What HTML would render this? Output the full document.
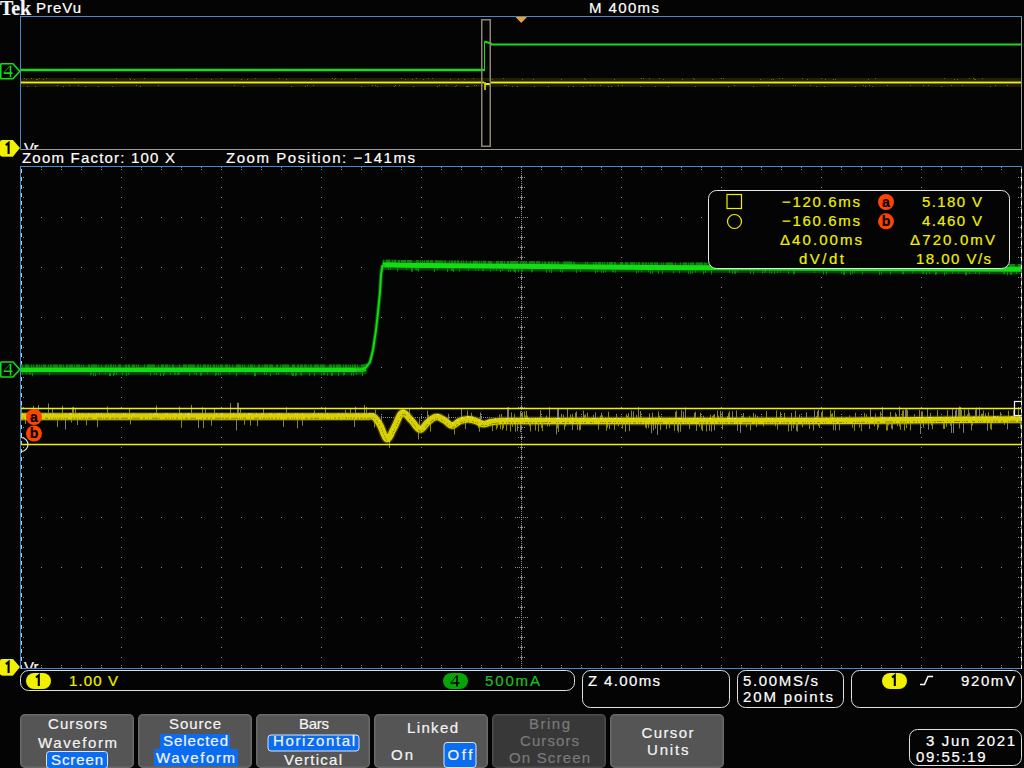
<!DOCTYPE html>
<html><head><meta charset="utf-8"><title>Oscilloscope</title>
<style>html,body{margin:0;padding:0;background:#040404;overflow:hidden;}svg{display:block;}</style>
</head><body><svg width="1024" height="768" viewBox="0 0 1024 768" font-family='"Liberation Sans", sans-serif'><rect x="0" y="0" width="1024" height="768" fill="#040404"/>
<text x="0" y="14.8" font-size="20" fill="#f4f4ff" stroke="#f4f4ff" stroke-width="0.2" font-weight="bold" text-anchor="start" textLength="31" lengthAdjust="spacing" font-family="Liberation Serif, serif">Tek</text>
<text x="36" y="13" font-size="15" fill="#fff" stroke="#fff" stroke-width="0.2" font-weight="normal" text-anchor="start" textLength="45" lengthAdjust="spacing" >PreVu</text>
<text x="589" y="13" font-size="15" fill="#fff" stroke="#fff" stroke-width="0.2" font-weight="normal" text-anchor="start" textLength="70" lengthAdjust="spacing" >M 400ms</text>
<line x1="20" y1="16.5" x2="1022" y2="16.5" stroke="#4a86c8" stroke-width="1"/>
<line x1="20.5" y1="16" x2="20.5" y2="150" stroke="#4a86c8" stroke-width="1"/>
<line x1="1021.5" y1="17" x2="1021.5" y2="150" stroke="#9a9a9a" stroke-width="1"/>
<line x1="21" y1="149.5" x2="1022" y2="149.5" stroke="#9a9a9a" stroke-width="1"/>
<rect x="21" y="78" width="1000" height="3" fill="#3c3a00" fill-opacity="0.55"/>
<rect x="21" y="84" width="1000" height="3" fill="#3c3a00" fill-opacity="0.45"/>
<path d="M24.5 78v1M26.5 79v1M27.5 86v1M31.5 78v1M35.5 86v1M36.5 79v1M37.5 79v1M39.5 78v1M43.5 79v1M46.5 78v1M57.5 85v1M63.5 86v1M69.5 85v1M74.5 78v1M78.5 85v1M85.5 86v1M98.5 86v1M112.5 86v1M116.5 78v1M129.5 78v1M130.5 79v1M134.5 79v1M136.5 85v1M140.5 86v1M144.5 78v1M158.5 85v1M186.5 78v1M196.5 78v1M211.5 79v1M221.5 78v1M234.5 85v1M241.5 79v1M243.5 86v1M247.5 79v1M255.5 78v1M279.5 78v1M286.5 79v1M291.5 86v1M305.5 86v1M307.5 85v1M311.5 79v1M313.5 85v1M332.5 78v1M334.5 79v1M335.5 78v1M341.5 79v1M355.5 78v1M361.5 86v1M372.5 85v1M375.5 85v1M377.5 86v1M394.5 86v1M395.5 85v1M399.5 85v1M401.5 78v1M405.5 79v1M412.5 79v1M413.5 86v1M416.5 78v1M423.5 79v1M428.5 78v1M432.5 78v1M437.5 86v1M439.5 85v1M446.5 85v1M450.5 79v1M455.5 86v1M456.5 85v1M458.5 79v1M464.5 79v1M466.5 86v1M467.5 86v1M468.5 86v1M473.5 78v1M474.5 85v1M476.5 85v1M482.5 78v1M489.5 85v1M490.5 85v1M492.5 79v1M503.5 78v1M504.5 85v1M506.5 85v1M512.5 86v1M517.5 86v1M522.5 79v1M533.5 79v1M534.5 86v1M548.5 86v1M561.5 79v1M568.5 86v1M573.5 86v1M583.5 86v1M584.5 78v1M585.5 79v1M590.5 85v1M594.5 85v1M600.5 85v1M608.5 86v1M611.5 86v1M614.5 79v1M618.5 85v1M622.5 85v1M640.5 86v1M641.5 78v1M643.5 78v1M649.5 78v1M655.5 86v1M659.5 78v1M663.5 79v1M668.5 86v1M682.5 79v1M693.5 78v1M694.5 79v1M695.5 86v1M712.5 79v1M721.5 78v1M723.5 78v1M728.5 86v1M734.5 85v1M753.5 86v1M760.5 79v1M768.5 85v1M771.5 79v1M773.5 79v1M779.5 78v1M782.5 78v1M793.5 85v1M795.5 85v1M802.5 78v1M807.5 79v1M810.5 85v1M816.5 86v1M821.5 78v1M824.5 86v1M825.5 79v1M833.5 79v1M835.5 79v1M855.5 86v1M863.5 85v1M865.5 86v1M868.5 79v1M869.5 85v1M872.5 86v1M875.5 78v1M887.5 85v1M910.5 85v1M923.5 85v1M928.5 85v1M941.5 86v1M944.5 78v1M951.5 85v1M954.5 79v1M957.5 79v1M962.5 85v1M969.5 78v1M973.5 78v1M974.5 79v1M975.5 79v1M982.5 78v1M990.5 86v1M995.5 85v1M1007.5 85v1" stroke="#6a6800" stroke-width="1" fill="none"/>
<path d="M21 82.5H484M491 82.5H1021" stroke="#f0f000" stroke-width="2" fill="none"/>
<path d="M485 82 V90" stroke="#f0f000" stroke-width="1.5" fill="none"/><path d="M485.5 84 H491" stroke="#f0f000" stroke-width="2" fill="none"/>
<path d="M21 70H484.5" stroke="#14dc14" stroke-width="2.5" fill="none"/>
<path d="M484.5 71V41.5" stroke="#14dc14" stroke-width="1" fill="none"/>
<path d="M484.5 41.5 L491 43.5 V44.5H1021" stroke="#14dc14" stroke-width="2" fill="none"/>
<rect x="481.75" y="19.75" width="8.5" height="126.5" fill="none" stroke="#8c8474" stroke-width="1.5"/>
<path d="M515.5 17 L527 17 L521.25 23 Z" fill="#f0a030"/>
<path d="M1.5 63.8 H13 L19.8 71.3 L13 78.8 H1.5 Q0.75 78.8 0.75 77.8 V64.8 Q0.75 63.8 1.5 63.8 Z" fill="#040404" stroke="#14dc14" stroke-width="1.6"/>
<path d="M10.5 65.8 V77.3 M3.8 73.1 H12.5" stroke="#14dc14" stroke-width="1.6" fill="none"/>
<path d="M4 72.5 L10 65.8" stroke="#14dc14" stroke-width="0.8" fill="none" stroke-opacity="0.8"/>
<path d="M2 140 H13 L20 148 L13 156.5 H2 Q0 156.5 0 154.5 V142 Q0 140 2 140 Z" fill="#f0f000"/>
<path d="M13 156.5 H2" stroke="#a8a800" stroke-width="1"/>
<path d="M5.8 145.2 L8.6 143 V154" stroke="#000" stroke-width="2.1" fill="none"/>
<text x="24" y="152.5" font-size="15" fill="#fff" stroke="#fff" stroke-width="0.2" font-weight="normal" text-anchor="start" clip-path="url(#cpv)">Vr</text>
<clipPath id="cpv"><rect x="21" y="130" width="100" height="19"/></clipPath>
<text x="22" y="163" font-size="15" fill="#fff" stroke="#fff" stroke-width="0.2" font-weight="normal" text-anchor="start" textLength="153" lengthAdjust="spacing" >Zoom Factor: 100 X</text>
<text x="226" y="163" font-size="15" fill="#fff" stroke="#fff" stroke-width="0.2" font-weight="normal" text-anchor="start" textLength="189" lengthAdjust="spacing" >Zoom Position: −141ms</text>
<path d="M23 177h1v1h-1zM23 187h1v1h-1zM23 197h1v1h-1zM23 207h1v1h-1zM23 217h1v1h-1zM23 227h1v1h-1zM23 237h1v1h-1zM23 247h1v1h-1zM23 257h1v1h-1zM23 267h1v1h-1zM23 277h1v1h-1zM23 287h1v1h-1zM23 297h1v1h-1zM23 307h1v1h-1zM23 317h1v1h-1zM23 327h1v1h-1zM23 337h1v1h-1zM23 347h1v1h-1zM23 357h1v1h-1zM23 367h1v1h-1zM23 377h1v1h-1zM23 387h1v1h-1zM23 397h1v1h-1zM23 407h1v1h-1zM23 417h1v1h-1zM23 427h1v1h-1zM23 437h1v1h-1zM23 447h1v1h-1zM23 457h1v1h-1zM23 467h1v1h-1zM23 477h1v1h-1zM23 487h1v1h-1zM23 497h1v1h-1zM23 507h1v1h-1zM23 517h1v1h-1zM23 527h1v1h-1zM23 537h1v1h-1zM23 547h1v1h-1zM23 557h1v1h-1zM23 567h1v1h-1zM23 577h1v1h-1zM23 587h1v1h-1zM23 597h1v1h-1zM23 607h1v1h-1zM23 617h1v1h-1zM23 627h1v1h-1zM23 637h1v1h-1zM23 647h1v1h-1zM23 657h1v1h-1zM25 417h1v1h-1zM27 417h1v1h-1zM29 417h1v1h-1zM31 417h1v1h-1zM33 417h1v1h-1zM35 417h1v1h-1zM37 417h1v1h-1zM39 417h1v1h-1zM41 169h1v1h-1zM41 217h1v1h-1zM41 267h1v1h-1zM41 317h1v1h-1zM41 367h1v1h-1zM41 414h1v1h-1zM41 416h1v1h-1zM41 417h1v1h-1zM41 418h1v1h-1zM41 420h1v1h-1zM41 467h1v1h-1zM41 517h1v1h-1zM41 567h1v1h-1zM41 617h1v1h-1zM41 665h1v1h-1zM43 417h1v1h-1zM45 417h1v1h-1zM47 417h1v1h-1zM49 417h1v1h-1zM51 417h1v1h-1zM53 417h1v1h-1zM55 417h1v1h-1zM57 417h1v1h-1zM59 417h1v1h-1zM61 169h1v1h-1zM61 217h1v1h-1zM61 267h1v1h-1zM61 317h1v1h-1zM61 367h1v1h-1zM61 414h1v1h-1zM61 416h1v1h-1zM61 417h1v1h-1zM61 418h1v1h-1zM61 420h1v1h-1zM61 467h1v1h-1zM61 517h1v1h-1zM61 567h1v1h-1zM61 617h1v1h-1zM61 665h1v1h-1zM63 417h1v1h-1zM65 417h1v1h-1zM67 417h1v1h-1zM69 417h1v1h-1zM71 417h1v1h-1zM73 417h1v1h-1zM75 417h1v1h-1zM77 417h1v1h-1zM79 417h1v1h-1zM81 169h1v1h-1zM81 217h1v1h-1zM81 267h1v1h-1zM81 317h1v1h-1zM81 367h1v1h-1zM81 414h1v1h-1zM81 416h1v1h-1zM81 417h1v1h-1zM81 418h1v1h-1zM81 420h1v1h-1zM81 467h1v1h-1zM81 517h1v1h-1zM81 567h1v1h-1zM81 617h1v1h-1zM81 665h1v1h-1zM83 417h1v1h-1zM85 417h1v1h-1zM87 417h1v1h-1zM89 417h1v1h-1zM91 417h1v1h-1zM93 417h1v1h-1zM95 417h1v1h-1zM97 417h1v1h-1zM99 417h1v1h-1zM101 169h1v1h-1zM101 217h1v1h-1zM101 267h1v1h-1zM101 317h1v1h-1zM101 367h1v1h-1zM101 414h1v1h-1zM101 416h1v1h-1zM101 417h1v1h-1zM101 418h1v1h-1zM101 420h1v1h-1zM101 467h1v1h-1zM101 517h1v1h-1zM101 567h1v1h-1zM101 617h1v1h-1zM101 665h1v1h-1zM103 417h1v1h-1zM105 417h1v1h-1zM107 417h1v1h-1zM109 417h1v1h-1zM111 417h1v1h-1zM113 417h1v1h-1zM115 417h1v1h-1zM117 417h1v1h-1zM119 417h1v1h-1zM121 169h1v1h-1zM121 177h1v1h-1zM121 187h1v1h-1zM121 197h1v1h-1zM121 207h1v1h-1zM121 217h1v1h-1zM121 227h1v1h-1zM121 237h1v1h-1zM121 247h1v1h-1zM121 257h1v1h-1zM121 267h1v1h-1zM121 277h1v1h-1zM121 287h1v1h-1zM121 297h1v1h-1zM121 307h1v1h-1zM121 317h1v1h-1zM121 327h1v1h-1zM121 337h1v1h-1zM121 347h1v1h-1zM121 357h1v1h-1zM121 367h1v1h-1zM121 377h1v1h-1zM121 387h1v1h-1zM121 397h1v1h-1zM121 407h1v1h-1zM121 414h1v1h-1zM121 416h1v1h-1zM121 417h1v1h-1zM121 418h1v1h-1zM121 420h1v1h-1zM121 427h1v1h-1zM121 437h1v1h-1zM121 447h1v1h-1zM121 457h1v1h-1zM121 467h1v1h-1zM121 477h1v1h-1zM121 487h1v1h-1zM121 497h1v1h-1zM121 507h1v1h-1zM121 517h1v1h-1zM121 527h1v1h-1zM121 537h1v1h-1zM121 547h1v1h-1zM121 557h1v1h-1zM121 567h1v1h-1zM121 577h1v1h-1zM121 587h1v1h-1zM121 597h1v1h-1zM121 607h1v1h-1zM121 617h1v1h-1zM121 627h1v1h-1zM121 637h1v1h-1zM121 647h1v1h-1zM121 657h1v1h-1zM121 665h1v1h-1zM123 417h1v1h-1zM125 417h1v1h-1zM127 417h1v1h-1zM129 417h1v1h-1zM131 417h1v1h-1zM133 417h1v1h-1zM135 417h1v1h-1zM137 417h1v1h-1zM139 417h1v1h-1zM141 169h1v1h-1zM141 217h1v1h-1zM141 267h1v1h-1zM141 317h1v1h-1zM141 367h1v1h-1zM141 414h1v1h-1zM141 416h1v1h-1zM141 417h1v1h-1zM141 418h1v1h-1zM141 420h1v1h-1zM141 467h1v1h-1zM141 517h1v1h-1zM141 567h1v1h-1zM141 617h1v1h-1zM141 665h1v1h-1zM143 417h1v1h-1zM145 417h1v1h-1zM147 417h1v1h-1zM149 417h1v1h-1zM151 417h1v1h-1zM153 417h1v1h-1zM155 417h1v1h-1zM157 417h1v1h-1zM159 417h1v1h-1zM161 169h1v1h-1zM161 217h1v1h-1zM161 267h1v1h-1zM161 317h1v1h-1zM161 367h1v1h-1zM161 414h1v1h-1zM161 416h1v1h-1zM161 417h1v1h-1zM161 418h1v1h-1zM161 420h1v1h-1zM161 467h1v1h-1zM161 517h1v1h-1zM161 567h1v1h-1zM161 617h1v1h-1zM161 665h1v1h-1zM163 417h1v1h-1zM165 417h1v1h-1zM167 417h1v1h-1zM169 417h1v1h-1zM171 417h1v1h-1zM173 417h1v1h-1zM175 417h1v1h-1zM177 417h1v1h-1zM179 417h1v1h-1zM181 169h1v1h-1zM181 217h1v1h-1zM181 267h1v1h-1zM181 317h1v1h-1zM181 367h1v1h-1zM181 414h1v1h-1zM181 416h1v1h-1zM181 417h1v1h-1zM181 418h1v1h-1zM181 420h1v1h-1zM181 467h1v1h-1zM181 517h1v1h-1zM181 567h1v1h-1zM181 617h1v1h-1zM181 665h1v1h-1zM183 417h1v1h-1zM185 417h1v1h-1zM187 417h1v1h-1zM189 417h1v1h-1zM191 417h1v1h-1zM193 417h1v1h-1zM195 417h1v1h-1zM197 417h1v1h-1zM199 417h1v1h-1zM201 169h1v1h-1zM201 217h1v1h-1zM201 267h1v1h-1zM201 317h1v1h-1zM201 367h1v1h-1zM201 414h1v1h-1zM201 416h1v1h-1zM201 417h1v1h-1zM201 418h1v1h-1zM201 420h1v1h-1zM201 467h1v1h-1zM201 517h1v1h-1zM201 567h1v1h-1zM201 617h1v1h-1zM201 665h1v1h-1zM203 417h1v1h-1zM205 417h1v1h-1zM207 417h1v1h-1zM209 417h1v1h-1zM211 417h1v1h-1zM213 417h1v1h-1zM215 417h1v1h-1zM217 417h1v1h-1zM219 417h1v1h-1zM221 169h1v1h-1zM221 177h1v1h-1zM221 187h1v1h-1zM221 197h1v1h-1zM221 207h1v1h-1zM221 217h1v1h-1zM221 227h1v1h-1zM221 237h1v1h-1zM221 247h1v1h-1zM221 257h1v1h-1zM221 267h1v1h-1zM221 277h1v1h-1zM221 287h1v1h-1zM221 297h1v1h-1zM221 307h1v1h-1zM221 317h1v1h-1zM221 327h1v1h-1zM221 337h1v1h-1zM221 347h1v1h-1zM221 357h1v1h-1zM221 367h1v1h-1zM221 377h1v1h-1zM221 387h1v1h-1zM221 397h1v1h-1zM221 407h1v1h-1zM221 414h1v1h-1zM221 416h1v1h-1zM221 417h1v1h-1zM221 418h1v1h-1zM221 420h1v1h-1zM221 427h1v1h-1zM221 437h1v1h-1zM221 447h1v1h-1zM221 457h1v1h-1zM221 467h1v1h-1zM221 477h1v1h-1zM221 487h1v1h-1zM221 497h1v1h-1zM221 507h1v1h-1zM221 517h1v1h-1zM221 527h1v1h-1zM221 537h1v1h-1zM221 547h1v1h-1zM221 557h1v1h-1zM221 567h1v1h-1zM221 577h1v1h-1zM221 587h1v1h-1zM221 597h1v1h-1zM221 607h1v1h-1zM221 617h1v1h-1zM221 627h1v1h-1zM221 637h1v1h-1zM221 647h1v1h-1zM221 657h1v1h-1zM221 665h1v1h-1zM223 417h1v1h-1zM225 417h1v1h-1zM227 417h1v1h-1zM229 417h1v1h-1zM231 417h1v1h-1zM233 417h1v1h-1zM235 417h1v1h-1zM237 417h1v1h-1zM239 417h1v1h-1zM241 169h1v1h-1zM241 217h1v1h-1zM241 267h1v1h-1zM241 317h1v1h-1zM241 367h1v1h-1zM241 414h1v1h-1zM241 416h1v1h-1zM241 417h1v1h-1zM241 418h1v1h-1zM241 420h1v1h-1zM241 467h1v1h-1zM241 517h1v1h-1zM241 567h1v1h-1zM241 617h1v1h-1zM241 665h1v1h-1zM243 417h1v1h-1zM245 417h1v1h-1zM247 417h1v1h-1zM249 417h1v1h-1zM251 417h1v1h-1zM253 417h1v1h-1zM255 417h1v1h-1zM257 417h1v1h-1zM259 417h1v1h-1zM261 169h1v1h-1zM261 217h1v1h-1zM261 267h1v1h-1zM261 317h1v1h-1zM261 367h1v1h-1zM261 414h1v1h-1zM261 416h1v1h-1zM261 417h1v1h-1zM261 418h1v1h-1zM261 420h1v1h-1zM261 467h1v1h-1zM261 517h1v1h-1zM261 567h1v1h-1zM261 617h1v1h-1zM261 665h1v1h-1zM263 417h1v1h-1zM265 417h1v1h-1zM267 417h1v1h-1zM269 417h1v1h-1zM271 417h1v1h-1zM273 417h1v1h-1zM275 417h1v1h-1zM277 417h1v1h-1zM279 417h1v1h-1zM281 169h1v1h-1zM281 217h1v1h-1zM281 267h1v1h-1zM281 317h1v1h-1zM281 367h1v1h-1zM281 414h1v1h-1zM281 416h1v1h-1zM281 417h1v1h-1zM281 418h1v1h-1zM281 420h1v1h-1zM281 467h1v1h-1zM281 517h1v1h-1zM281 567h1v1h-1zM281 617h1v1h-1zM281 665h1v1h-1zM283 417h1v1h-1zM285 417h1v1h-1zM287 417h1v1h-1zM289 417h1v1h-1zM291 417h1v1h-1zM293 417h1v1h-1zM295 417h1v1h-1zM297 417h1v1h-1zM299 417h1v1h-1zM301 169h1v1h-1zM301 217h1v1h-1zM301 267h1v1h-1zM301 317h1v1h-1zM301 367h1v1h-1zM301 414h1v1h-1zM301 416h1v1h-1zM301 417h1v1h-1zM301 418h1v1h-1zM301 420h1v1h-1zM301 467h1v1h-1zM301 517h1v1h-1zM301 567h1v1h-1zM301 617h1v1h-1zM301 665h1v1h-1zM303 417h1v1h-1zM305 417h1v1h-1zM307 417h1v1h-1zM309 417h1v1h-1zM311 417h1v1h-1zM313 417h1v1h-1zM315 417h1v1h-1zM317 417h1v1h-1zM319 417h1v1h-1zM321 169h1v1h-1zM321 177h1v1h-1zM321 187h1v1h-1zM321 197h1v1h-1zM321 207h1v1h-1zM321 217h1v1h-1zM321 227h1v1h-1zM321 237h1v1h-1zM321 247h1v1h-1zM321 257h1v1h-1zM321 267h1v1h-1zM321 277h1v1h-1zM321 287h1v1h-1zM321 297h1v1h-1zM321 307h1v1h-1zM321 317h1v1h-1zM321 327h1v1h-1zM321 337h1v1h-1zM321 347h1v1h-1zM321 357h1v1h-1zM321 367h1v1h-1zM321 377h1v1h-1zM321 387h1v1h-1zM321 397h1v1h-1zM321 407h1v1h-1zM321 414h1v1h-1zM321 416h1v1h-1zM321 417h1v1h-1zM321 418h1v1h-1zM321 420h1v1h-1zM321 427h1v1h-1zM321 437h1v1h-1zM321 447h1v1h-1zM321 457h1v1h-1zM321 467h1v1h-1zM321 477h1v1h-1zM321 487h1v1h-1zM321 497h1v1h-1zM321 507h1v1h-1zM321 517h1v1h-1zM321 527h1v1h-1zM321 537h1v1h-1zM321 547h1v1h-1zM321 557h1v1h-1zM321 567h1v1h-1zM321 577h1v1h-1zM321 587h1v1h-1zM321 597h1v1h-1zM321 607h1v1h-1zM321 617h1v1h-1zM321 627h1v1h-1zM321 637h1v1h-1zM321 647h1v1h-1zM321 657h1v1h-1zM321 665h1v1h-1zM323 417h1v1h-1zM325 417h1v1h-1zM327 417h1v1h-1zM329 417h1v1h-1zM331 417h1v1h-1zM333 417h1v1h-1zM335 417h1v1h-1zM337 417h1v1h-1zM339 417h1v1h-1zM341 169h1v1h-1zM341 217h1v1h-1zM341 267h1v1h-1zM341 317h1v1h-1zM341 367h1v1h-1zM341 414h1v1h-1zM341 416h1v1h-1zM341 417h1v1h-1zM341 418h1v1h-1zM341 420h1v1h-1zM341 467h1v1h-1zM341 517h1v1h-1zM341 567h1v1h-1zM341 617h1v1h-1zM341 665h1v1h-1zM343 417h1v1h-1zM345 417h1v1h-1zM347 417h1v1h-1zM349 417h1v1h-1zM351 417h1v1h-1zM353 417h1v1h-1zM355 417h1v1h-1zM357 417h1v1h-1zM359 417h1v1h-1zM361 169h1v1h-1zM361 217h1v1h-1zM361 267h1v1h-1zM361 317h1v1h-1zM361 367h1v1h-1zM361 414h1v1h-1zM361 416h1v1h-1zM361 417h1v1h-1zM361 418h1v1h-1zM361 420h1v1h-1zM361 467h1v1h-1zM361 517h1v1h-1zM361 567h1v1h-1zM361 617h1v1h-1zM361 665h1v1h-1zM363 417h1v1h-1zM365 417h1v1h-1zM367 417h1v1h-1zM369 417h1v1h-1zM371 417h1v1h-1zM373 417h1v1h-1zM375 417h1v1h-1zM377 417h1v1h-1zM379 417h1v1h-1zM381 169h1v1h-1zM381 217h1v1h-1zM381 267h1v1h-1zM381 317h1v1h-1zM381 367h1v1h-1zM381 414h1v1h-1zM381 416h1v1h-1zM381 417h1v1h-1zM381 418h1v1h-1zM381 420h1v1h-1zM381 467h1v1h-1zM381 517h1v1h-1zM381 567h1v1h-1zM381 617h1v1h-1zM381 665h1v1h-1zM383 417h1v1h-1zM385 417h1v1h-1zM387 417h1v1h-1zM389 417h1v1h-1zM391 417h1v1h-1zM393 417h1v1h-1zM395 417h1v1h-1zM397 417h1v1h-1zM399 417h1v1h-1zM401 169h1v1h-1zM401 217h1v1h-1zM401 267h1v1h-1zM401 317h1v1h-1zM401 367h1v1h-1zM401 414h1v1h-1zM401 416h1v1h-1zM401 417h1v1h-1zM401 418h1v1h-1zM401 420h1v1h-1zM401 467h1v1h-1zM401 517h1v1h-1zM401 567h1v1h-1zM401 617h1v1h-1zM401 665h1v1h-1zM403 417h1v1h-1zM405 417h1v1h-1zM407 417h1v1h-1zM409 417h1v1h-1zM411 417h1v1h-1zM413 417h1v1h-1zM415 417h1v1h-1zM417 417h1v1h-1zM419 417h1v1h-1zM421 169h1v1h-1zM421 177h1v1h-1zM421 187h1v1h-1zM421 197h1v1h-1zM421 207h1v1h-1zM421 217h1v1h-1zM421 227h1v1h-1zM421 237h1v1h-1zM421 247h1v1h-1zM421 257h1v1h-1zM421 267h1v1h-1zM421 277h1v1h-1zM421 287h1v1h-1zM421 297h1v1h-1zM421 307h1v1h-1zM421 317h1v1h-1zM421 327h1v1h-1zM421 337h1v1h-1zM421 347h1v1h-1zM421 357h1v1h-1zM421 367h1v1h-1zM421 377h1v1h-1zM421 387h1v1h-1zM421 397h1v1h-1zM421 407h1v1h-1zM421 414h1v1h-1zM421 416h1v1h-1zM421 417h1v1h-1zM421 418h1v1h-1zM421 420h1v1h-1zM421 427h1v1h-1zM421 437h1v1h-1zM421 447h1v1h-1zM421 457h1v1h-1zM421 467h1v1h-1zM421 477h1v1h-1zM421 487h1v1h-1zM421 497h1v1h-1zM421 507h1v1h-1zM421 517h1v1h-1zM421 527h1v1h-1zM421 537h1v1h-1zM421 547h1v1h-1zM421 557h1v1h-1zM421 567h1v1h-1zM421 577h1v1h-1zM421 587h1v1h-1zM421 597h1v1h-1zM421 607h1v1h-1zM421 617h1v1h-1zM421 627h1v1h-1zM421 637h1v1h-1zM421 647h1v1h-1zM421 657h1v1h-1zM421 665h1v1h-1zM423 417h1v1h-1zM425 417h1v1h-1zM427 417h1v1h-1zM429 417h1v1h-1zM431 417h1v1h-1zM433 417h1v1h-1zM435 417h1v1h-1zM437 417h1v1h-1zM439 417h1v1h-1zM441 169h1v1h-1zM441 217h1v1h-1zM441 267h1v1h-1zM441 317h1v1h-1zM441 367h1v1h-1zM441 414h1v1h-1zM441 416h1v1h-1zM441 417h1v1h-1zM441 418h1v1h-1zM441 420h1v1h-1zM441 467h1v1h-1zM441 517h1v1h-1zM441 567h1v1h-1zM441 617h1v1h-1zM441 665h1v1h-1zM443 417h1v1h-1zM445 417h1v1h-1zM447 417h1v1h-1zM449 417h1v1h-1zM451 417h1v1h-1zM453 417h1v1h-1zM455 417h1v1h-1zM457 417h1v1h-1zM459 417h1v1h-1zM461 169h1v1h-1zM461 217h1v1h-1zM461 267h1v1h-1zM461 317h1v1h-1zM461 367h1v1h-1zM461 414h1v1h-1zM461 416h1v1h-1zM461 417h1v1h-1zM461 418h1v1h-1zM461 420h1v1h-1zM461 467h1v1h-1zM461 517h1v1h-1zM461 567h1v1h-1zM461 617h1v1h-1zM461 665h1v1h-1zM463 417h1v1h-1zM465 417h1v1h-1zM467 417h1v1h-1zM469 417h1v1h-1zM471 417h1v1h-1zM473 417h1v1h-1zM475 417h1v1h-1zM477 417h1v1h-1zM479 417h1v1h-1zM481 169h1v1h-1zM481 217h1v1h-1zM481 267h1v1h-1zM481 317h1v1h-1zM481 367h1v1h-1zM481 414h1v1h-1zM481 416h1v1h-1zM481 417h1v1h-1zM481 418h1v1h-1zM481 420h1v1h-1zM481 467h1v1h-1zM481 517h1v1h-1zM481 567h1v1h-1zM481 617h1v1h-1zM481 665h1v1h-1zM483 417h1v1h-1zM485 417h1v1h-1zM487 417h1v1h-1zM489 417h1v1h-1zM491 417h1v1h-1zM493 417h1v1h-1zM495 417h1v1h-1zM497 417h1v1h-1zM499 417h1v1h-1zM501 169h1v1h-1zM501 217h1v1h-1zM501 267h1v1h-1zM501 317h1v1h-1zM501 367h1v1h-1zM501 414h1v1h-1zM501 416h1v1h-1zM501 417h1v1h-1zM501 418h1v1h-1zM501 420h1v1h-1zM501 467h1v1h-1zM501 517h1v1h-1zM501 567h1v1h-1zM501 617h1v1h-1zM501 665h1v1h-1zM503 417h1v1h-1zM505 417h1v1h-1zM507 417h1v1h-1zM509 417h1v1h-1zM511 417h1v1h-1zM513 417h1v1h-1zM515 217h1v1h-1zM515 267h1v1h-1zM515 317h1v1h-1zM515 367h1v1h-1zM515 417h1v1h-1zM515 467h1v1h-1zM515 517h1v1h-1zM515 567h1v1h-1zM515 617h1v1h-1zM517 217h1v1h-1zM517 267h1v1h-1zM517 317h1v1h-1zM517 367h1v1h-1zM517 417h1v1h-1zM517 467h1v1h-1zM517 517h1v1h-1zM517 567h1v1h-1zM517 617h1v1h-1zM518 177h1v1h-1zM518 187h1v1h-1zM518 197h1v1h-1zM518 207h1v1h-1zM518 227h1v1h-1zM518 237h1v1h-1zM518 247h1v1h-1zM518 257h1v1h-1zM518 277h1v1h-1zM518 287h1v1h-1zM518 297h1v1h-1zM518 307h1v1h-1zM518 327h1v1h-1zM518 337h1v1h-1zM518 347h1v1h-1zM518 357h1v1h-1zM518 377h1v1h-1zM518 387h1v1h-1zM518 397h1v1h-1zM518 407h1v1h-1zM518 427h1v1h-1zM518 437h1v1h-1zM518 447h1v1h-1zM518 457h1v1h-1zM518 477h1v1h-1zM518 487h1v1h-1zM518 497h1v1h-1zM518 507h1v1h-1zM518 527h1v1h-1zM518 537h1v1h-1zM518 547h1v1h-1zM518 557h1v1h-1zM518 577h1v1h-1zM518 587h1v1h-1zM518 597h1v1h-1zM518 607h1v1h-1zM518 627h1v1h-1zM518 637h1v1h-1zM518 647h1v1h-1zM518 657h1v1h-1zM519 217h1v1h-1zM519 267h1v1h-1zM519 317h1v1h-1zM519 367h1v1h-1zM519 417h1v1h-1zM519 467h1v1h-1zM519 517h1v1h-1zM519 567h1v1h-1zM519 617h1v1h-1zM520 177h1v1h-1zM520 187h1v1h-1zM520 197h1v1h-1zM520 207h1v1h-1zM520 227h1v1h-1zM520 237h1v1h-1zM520 247h1v1h-1zM520 257h1v1h-1zM520 277h1v1h-1zM520 287h1v1h-1zM520 297h1v1h-1zM520 307h1v1h-1zM520 327h1v1h-1zM520 337h1v1h-1zM520 347h1v1h-1zM520 357h1v1h-1zM520 377h1v1h-1zM520 387h1v1h-1zM520 397h1v1h-1zM520 407h1v1h-1zM520 427h1v1h-1zM520 437h1v1h-1zM520 447h1v1h-1zM520 457h1v1h-1zM520 477h1v1h-1zM520 487h1v1h-1zM520 497h1v1h-1zM520 507h1v1h-1zM520 527h1v1h-1zM520 537h1v1h-1zM520 547h1v1h-1zM520 557h1v1h-1zM520 577h1v1h-1zM520 587h1v1h-1zM520 597h1v1h-1zM520 607h1v1h-1zM520 627h1v1h-1zM520 637h1v1h-1zM520 647h1v1h-1zM520 657h1v1h-1zM521 169h1v1h-1zM521 171h1v1h-1zM521 173h1v1h-1zM521 175h1v1h-1zM521 176h1v1h-1zM521 177h1v1h-1zM521 178h1v1h-1zM521 179h1v1h-1zM521 181h1v1h-1zM521 183h1v1h-1zM521 185h1v1h-1zM521 186h1v1h-1zM521 187h1v1h-1zM521 188h1v1h-1zM521 189h1v1h-1zM521 191h1v1h-1zM521 193h1v1h-1zM521 195h1v1h-1zM521 196h1v1h-1zM521 197h1v1h-1zM521 198h1v1h-1zM521 199h1v1h-1zM521 201h1v1h-1zM521 203h1v1h-1zM521 205h1v1h-1zM521 206h1v1h-1zM521 207h1v1h-1zM521 208h1v1h-1zM521 209h1v1h-1zM521 211h1v1h-1zM521 213h1v1h-1zM521 215h1v1h-1zM521 217h1v1h-1zM521 219h1v1h-1zM521 221h1v1h-1zM521 223h1v1h-1zM521 225h1v1h-1zM521 226h1v1h-1zM521 227h1v1h-1zM521 228h1v1h-1zM521 229h1v1h-1zM521 231h1v1h-1zM521 233h1v1h-1zM521 235h1v1h-1zM521 236h1v1h-1zM521 237h1v1h-1zM521 238h1v1h-1zM521 239h1v1h-1zM521 241h1v1h-1zM521 243h1v1h-1zM521 245h1v1h-1zM521 246h1v1h-1zM521 247h1v1h-1zM521 248h1v1h-1zM521 249h1v1h-1zM521 251h1v1h-1zM521 253h1v1h-1zM521 255h1v1h-1zM521 256h1v1h-1zM521 257h1v1h-1zM521 258h1v1h-1zM521 259h1v1h-1zM521 261h1v1h-1zM521 263h1v1h-1zM521 265h1v1h-1zM521 267h1v1h-1zM521 269h1v1h-1zM521 271h1v1h-1zM521 273h1v1h-1zM521 275h1v1h-1zM521 276h1v1h-1zM521 277h1v1h-1zM521 278h1v1h-1zM521 279h1v1h-1zM521 281h1v1h-1zM521 283h1v1h-1zM521 285h1v1h-1zM521 286h1v1h-1zM521 287h1v1h-1zM521 288h1v1h-1zM521 289h1v1h-1zM521 291h1v1h-1zM521 293h1v1h-1zM521 295h1v1h-1zM521 296h1v1h-1zM521 297h1v1h-1zM521 298h1v1h-1zM521 299h1v1h-1zM521 301h1v1h-1zM521 303h1v1h-1zM521 305h1v1h-1zM521 306h1v1h-1zM521 307h1v1h-1zM521 308h1v1h-1zM521 309h1v1h-1zM521 311h1v1h-1zM521 313h1v1h-1zM521 315h1v1h-1zM521 317h1v1h-1zM521 319h1v1h-1zM521 321h1v1h-1zM521 323h1v1h-1zM521 325h1v1h-1zM521 326h1v1h-1zM521 327h1v1h-1zM521 328h1v1h-1zM521 329h1v1h-1zM521 331h1v1h-1zM521 333h1v1h-1zM521 335h1v1h-1zM521 336h1v1h-1zM521 337h1v1h-1zM521 338h1v1h-1zM521 339h1v1h-1zM521 341h1v1h-1zM521 343h1v1h-1zM521 345h1v1h-1zM521 346h1v1h-1zM521 347h1v1h-1zM521 348h1v1h-1zM521 349h1v1h-1zM521 351h1v1h-1zM521 353h1v1h-1zM521 355h1v1h-1zM521 356h1v1h-1zM521 357h1v1h-1zM521 358h1v1h-1zM521 359h1v1h-1zM521 361h1v1h-1zM521 363h1v1h-1zM521 365h1v1h-1zM521 367h1v1h-1zM521 369h1v1h-1zM521 371h1v1h-1zM521 373h1v1h-1zM521 375h1v1h-1zM521 376h1v1h-1zM521 377h1v1h-1zM521 378h1v1h-1zM521 379h1v1h-1zM521 381h1v1h-1zM521 383h1v1h-1zM521 385h1v1h-1zM521 386h1v1h-1zM521 387h1v1h-1zM521 388h1v1h-1zM521 389h1v1h-1zM521 391h1v1h-1zM521 393h1v1h-1zM521 395h1v1h-1zM521 396h1v1h-1zM521 397h1v1h-1zM521 398h1v1h-1zM521 399h1v1h-1zM521 401h1v1h-1zM521 403h1v1h-1zM521 405h1v1h-1zM521 406h1v1h-1zM521 407h1v1h-1zM521 408h1v1h-1zM521 409h1v1h-1zM521 411h1v1h-1zM521 413h1v1h-1zM521 414h1v1h-1zM521 415h1v1h-1zM521 416h1v1h-1zM521 417h1v1h-1zM521 418h1v1h-1zM521 419h1v1h-1zM521 420h1v1h-1zM521 421h1v1h-1zM521 423h1v1h-1zM521 425h1v1h-1zM521 426h1v1h-1zM521 427h1v1h-1zM521 428h1v1h-1zM521 429h1v1h-1zM521 431h1v1h-1zM521 433h1v1h-1zM521 435h1v1h-1zM521 436h1v1h-1zM521 437h1v1h-1zM521 438h1v1h-1zM521 439h1v1h-1zM521 441h1v1h-1zM521 443h1v1h-1zM521 445h1v1h-1zM521 446h1v1h-1zM521 447h1v1h-1zM521 448h1v1h-1zM521 449h1v1h-1zM521 451h1v1h-1zM521 453h1v1h-1zM521 455h1v1h-1zM521 456h1v1h-1zM521 457h1v1h-1zM521 458h1v1h-1zM521 459h1v1h-1zM521 461h1v1h-1zM521 463h1v1h-1zM521 465h1v1h-1zM521 467h1v1h-1zM521 469h1v1h-1zM521 471h1v1h-1zM521 473h1v1h-1zM521 475h1v1h-1zM521 476h1v1h-1zM521 477h1v1h-1zM521 478h1v1h-1zM521 479h1v1h-1zM521 481h1v1h-1zM521 483h1v1h-1zM521 485h1v1h-1zM521 486h1v1h-1zM521 487h1v1h-1zM521 488h1v1h-1zM521 489h1v1h-1zM521 491h1v1h-1zM521 493h1v1h-1zM521 495h1v1h-1zM521 496h1v1h-1zM521 497h1v1h-1zM521 498h1v1h-1zM521 499h1v1h-1zM521 501h1v1h-1zM521 503h1v1h-1zM521 505h1v1h-1zM521 506h1v1h-1zM521 507h1v1h-1zM521 508h1v1h-1zM521 509h1v1h-1zM521 511h1v1h-1zM521 513h1v1h-1zM521 515h1v1h-1zM521 517h1v1h-1zM521 519h1v1h-1zM521 521h1v1h-1zM521 523h1v1h-1zM521 525h1v1h-1zM521 526h1v1h-1zM521 527h1v1h-1zM521 528h1v1h-1zM521 529h1v1h-1zM521 531h1v1h-1zM521 533h1v1h-1zM521 535h1v1h-1zM521 536h1v1h-1zM521 537h1v1h-1zM521 538h1v1h-1zM521 539h1v1h-1zM521 541h1v1h-1zM521 543h1v1h-1zM521 545h1v1h-1zM521 546h1v1h-1zM521 547h1v1h-1zM521 548h1v1h-1zM521 549h1v1h-1zM521 551h1v1h-1zM521 553h1v1h-1zM521 555h1v1h-1zM521 556h1v1h-1zM521 557h1v1h-1zM521 558h1v1h-1zM521 559h1v1h-1zM521 561h1v1h-1zM521 563h1v1h-1zM521 565h1v1h-1zM521 567h1v1h-1zM521 569h1v1h-1zM521 571h1v1h-1zM521 573h1v1h-1zM521 575h1v1h-1zM521 576h1v1h-1zM521 577h1v1h-1zM521 578h1v1h-1zM521 579h1v1h-1zM521 581h1v1h-1zM521 583h1v1h-1zM521 585h1v1h-1zM521 586h1v1h-1zM521 587h1v1h-1zM521 588h1v1h-1zM521 589h1v1h-1zM521 591h1v1h-1zM521 593h1v1h-1zM521 595h1v1h-1zM521 596h1v1h-1zM521 597h1v1h-1zM521 598h1v1h-1zM521 599h1v1h-1zM521 601h1v1h-1zM521 603h1v1h-1zM521 605h1v1h-1zM521 606h1v1h-1zM521 607h1v1h-1zM521 608h1v1h-1zM521 609h1v1h-1zM521 611h1v1h-1zM521 613h1v1h-1zM521 615h1v1h-1zM521 617h1v1h-1zM521 619h1v1h-1zM521 621h1v1h-1zM521 623h1v1h-1zM521 625h1v1h-1zM521 626h1v1h-1zM521 627h1v1h-1zM521 628h1v1h-1zM521 629h1v1h-1zM521 631h1v1h-1zM521 633h1v1h-1zM521 635h1v1h-1zM521 636h1v1h-1zM521 637h1v1h-1zM521 638h1v1h-1zM521 639h1v1h-1zM521 641h1v1h-1zM521 643h1v1h-1zM521 645h1v1h-1zM521 646h1v1h-1zM521 647h1v1h-1zM521 648h1v1h-1zM521 649h1v1h-1zM521 651h1v1h-1zM521 653h1v1h-1zM521 655h1v1h-1zM521 656h1v1h-1zM521 657h1v1h-1zM521 658h1v1h-1zM521 659h1v1h-1zM521 661h1v1h-1zM521 663h1v1h-1zM521 665h1v1h-1zM522 177h1v1h-1zM522 187h1v1h-1zM522 197h1v1h-1zM522 207h1v1h-1zM522 227h1v1h-1zM522 237h1v1h-1zM522 247h1v1h-1zM522 257h1v1h-1zM522 277h1v1h-1zM522 287h1v1h-1zM522 297h1v1h-1zM522 307h1v1h-1zM522 327h1v1h-1zM522 337h1v1h-1zM522 347h1v1h-1zM522 357h1v1h-1zM522 377h1v1h-1zM522 387h1v1h-1zM522 397h1v1h-1zM522 407h1v1h-1zM522 427h1v1h-1zM522 437h1v1h-1zM522 447h1v1h-1zM522 457h1v1h-1zM522 477h1v1h-1zM522 487h1v1h-1zM522 497h1v1h-1zM522 507h1v1h-1zM522 527h1v1h-1zM522 537h1v1h-1zM522 547h1v1h-1zM522 557h1v1h-1zM522 577h1v1h-1zM522 587h1v1h-1zM522 597h1v1h-1zM522 607h1v1h-1zM522 627h1v1h-1zM522 637h1v1h-1zM522 647h1v1h-1zM522 657h1v1h-1zM523 217h1v1h-1zM523 267h1v1h-1zM523 317h1v1h-1zM523 367h1v1h-1zM523 417h1v1h-1zM523 467h1v1h-1zM523 517h1v1h-1zM523 567h1v1h-1zM523 617h1v1h-1zM524 177h1v1h-1zM524 187h1v1h-1zM524 197h1v1h-1zM524 207h1v1h-1zM524 227h1v1h-1zM524 237h1v1h-1zM524 247h1v1h-1zM524 257h1v1h-1zM524 277h1v1h-1zM524 287h1v1h-1zM524 297h1v1h-1zM524 307h1v1h-1zM524 327h1v1h-1zM524 337h1v1h-1zM524 347h1v1h-1zM524 357h1v1h-1zM524 377h1v1h-1zM524 387h1v1h-1zM524 397h1v1h-1zM524 407h1v1h-1zM524 427h1v1h-1zM524 437h1v1h-1zM524 447h1v1h-1zM524 457h1v1h-1zM524 477h1v1h-1zM524 487h1v1h-1zM524 497h1v1h-1zM524 507h1v1h-1zM524 527h1v1h-1zM524 537h1v1h-1zM524 547h1v1h-1zM524 557h1v1h-1zM524 577h1v1h-1zM524 587h1v1h-1zM524 597h1v1h-1zM524 607h1v1h-1zM524 627h1v1h-1zM524 637h1v1h-1zM524 647h1v1h-1zM524 657h1v1h-1zM525 217h1v1h-1zM525 267h1v1h-1zM525 317h1v1h-1zM525 367h1v1h-1zM525 417h1v1h-1zM525 467h1v1h-1zM525 517h1v1h-1zM525 567h1v1h-1zM525 617h1v1h-1zM527 217h1v1h-1zM527 267h1v1h-1zM527 317h1v1h-1zM527 367h1v1h-1zM527 417h1v1h-1zM527 467h1v1h-1zM527 517h1v1h-1zM527 567h1v1h-1zM527 617h1v1h-1zM529 417h1v1h-1zM531 417h1v1h-1zM533 417h1v1h-1zM535 417h1v1h-1zM537 417h1v1h-1zM539 417h1v1h-1zM541 169h1v1h-1zM541 217h1v1h-1zM541 267h1v1h-1zM541 317h1v1h-1zM541 367h1v1h-1zM541 414h1v1h-1zM541 416h1v1h-1zM541 417h1v1h-1zM541 418h1v1h-1zM541 420h1v1h-1zM541 467h1v1h-1zM541 517h1v1h-1zM541 567h1v1h-1zM541 617h1v1h-1zM541 665h1v1h-1zM543 417h1v1h-1zM545 417h1v1h-1zM547 417h1v1h-1zM549 417h1v1h-1zM551 417h1v1h-1zM553 417h1v1h-1zM555 417h1v1h-1zM557 417h1v1h-1zM559 417h1v1h-1zM561 169h1v1h-1zM561 217h1v1h-1zM561 267h1v1h-1zM561 317h1v1h-1zM561 367h1v1h-1zM561 414h1v1h-1zM561 416h1v1h-1zM561 417h1v1h-1zM561 418h1v1h-1zM561 420h1v1h-1zM561 467h1v1h-1zM561 517h1v1h-1zM561 567h1v1h-1zM561 617h1v1h-1zM561 665h1v1h-1zM563 417h1v1h-1zM565 417h1v1h-1zM567 417h1v1h-1zM569 417h1v1h-1zM571 417h1v1h-1zM573 417h1v1h-1zM575 417h1v1h-1zM577 417h1v1h-1zM579 417h1v1h-1zM581 169h1v1h-1zM581 217h1v1h-1zM581 267h1v1h-1zM581 317h1v1h-1zM581 367h1v1h-1zM581 414h1v1h-1zM581 416h1v1h-1zM581 417h1v1h-1zM581 418h1v1h-1zM581 420h1v1h-1zM581 467h1v1h-1zM581 517h1v1h-1zM581 567h1v1h-1zM581 617h1v1h-1zM581 665h1v1h-1zM583 417h1v1h-1zM585 417h1v1h-1zM587 417h1v1h-1zM589 417h1v1h-1zM591 417h1v1h-1zM593 417h1v1h-1zM595 417h1v1h-1zM597 417h1v1h-1zM599 417h1v1h-1zM601 169h1v1h-1zM601 217h1v1h-1zM601 267h1v1h-1zM601 317h1v1h-1zM601 367h1v1h-1zM601 414h1v1h-1zM601 416h1v1h-1zM601 417h1v1h-1zM601 418h1v1h-1zM601 420h1v1h-1zM601 467h1v1h-1zM601 517h1v1h-1zM601 567h1v1h-1zM601 617h1v1h-1zM601 665h1v1h-1zM603 417h1v1h-1zM605 417h1v1h-1zM607 417h1v1h-1zM609 417h1v1h-1zM611 417h1v1h-1zM613 417h1v1h-1zM615 417h1v1h-1zM617 417h1v1h-1zM619 417h1v1h-1zM621 169h1v1h-1zM621 177h1v1h-1zM621 187h1v1h-1zM621 197h1v1h-1zM621 207h1v1h-1zM621 217h1v1h-1zM621 227h1v1h-1zM621 237h1v1h-1zM621 247h1v1h-1zM621 257h1v1h-1zM621 267h1v1h-1zM621 277h1v1h-1zM621 287h1v1h-1zM621 297h1v1h-1zM621 307h1v1h-1zM621 317h1v1h-1zM621 327h1v1h-1zM621 337h1v1h-1zM621 347h1v1h-1zM621 357h1v1h-1zM621 367h1v1h-1zM621 377h1v1h-1zM621 387h1v1h-1zM621 397h1v1h-1zM621 407h1v1h-1zM621 414h1v1h-1zM621 416h1v1h-1zM621 417h1v1h-1zM621 418h1v1h-1zM621 420h1v1h-1zM621 427h1v1h-1zM621 437h1v1h-1zM621 447h1v1h-1zM621 457h1v1h-1zM621 467h1v1h-1zM621 477h1v1h-1zM621 487h1v1h-1zM621 497h1v1h-1zM621 507h1v1h-1zM621 517h1v1h-1zM621 527h1v1h-1zM621 537h1v1h-1zM621 547h1v1h-1zM621 557h1v1h-1zM621 567h1v1h-1zM621 577h1v1h-1zM621 587h1v1h-1zM621 597h1v1h-1zM621 607h1v1h-1zM621 617h1v1h-1zM621 627h1v1h-1zM621 637h1v1h-1zM621 647h1v1h-1zM621 657h1v1h-1zM621 665h1v1h-1zM623 417h1v1h-1zM625 417h1v1h-1zM627 417h1v1h-1zM629 417h1v1h-1zM631 417h1v1h-1zM633 417h1v1h-1zM635 417h1v1h-1zM637 417h1v1h-1zM639 417h1v1h-1zM641 169h1v1h-1zM641 217h1v1h-1zM641 267h1v1h-1zM641 317h1v1h-1zM641 367h1v1h-1zM641 414h1v1h-1zM641 416h1v1h-1zM641 417h1v1h-1zM641 418h1v1h-1zM641 420h1v1h-1zM641 467h1v1h-1zM641 517h1v1h-1zM641 567h1v1h-1zM641 617h1v1h-1zM641 665h1v1h-1zM643 417h1v1h-1zM645 417h1v1h-1zM647 417h1v1h-1zM649 417h1v1h-1zM651 417h1v1h-1zM653 417h1v1h-1zM655 417h1v1h-1zM657 417h1v1h-1zM659 417h1v1h-1zM661 169h1v1h-1zM661 217h1v1h-1zM661 267h1v1h-1zM661 317h1v1h-1zM661 367h1v1h-1zM661 414h1v1h-1zM661 416h1v1h-1zM661 417h1v1h-1zM661 418h1v1h-1zM661 420h1v1h-1zM661 467h1v1h-1zM661 517h1v1h-1zM661 567h1v1h-1zM661 617h1v1h-1zM661 665h1v1h-1zM663 417h1v1h-1zM665 417h1v1h-1zM667 417h1v1h-1zM669 417h1v1h-1zM671 417h1v1h-1zM673 417h1v1h-1zM675 417h1v1h-1zM677 417h1v1h-1zM679 417h1v1h-1zM681 169h1v1h-1zM681 217h1v1h-1zM681 267h1v1h-1zM681 317h1v1h-1zM681 367h1v1h-1zM681 414h1v1h-1zM681 416h1v1h-1zM681 417h1v1h-1zM681 418h1v1h-1zM681 420h1v1h-1zM681 467h1v1h-1zM681 517h1v1h-1zM681 567h1v1h-1zM681 617h1v1h-1zM681 665h1v1h-1zM683 417h1v1h-1zM685 417h1v1h-1zM687 417h1v1h-1zM689 417h1v1h-1zM691 417h1v1h-1zM693 417h1v1h-1zM695 417h1v1h-1zM697 417h1v1h-1zM699 417h1v1h-1zM701 169h1v1h-1zM701 217h1v1h-1zM701 267h1v1h-1zM701 317h1v1h-1zM701 367h1v1h-1zM701 414h1v1h-1zM701 416h1v1h-1zM701 417h1v1h-1zM701 418h1v1h-1zM701 420h1v1h-1zM701 467h1v1h-1zM701 517h1v1h-1zM701 567h1v1h-1zM701 617h1v1h-1zM701 665h1v1h-1zM703 417h1v1h-1zM705 417h1v1h-1zM707 417h1v1h-1zM709 417h1v1h-1zM711 417h1v1h-1zM713 417h1v1h-1zM715 417h1v1h-1zM717 417h1v1h-1zM719 417h1v1h-1zM721 169h1v1h-1zM721 177h1v1h-1zM721 187h1v1h-1zM721 197h1v1h-1zM721 207h1v1h-1zM721 217h1v1h-1zM721 227h1v1h-1zM721 237h1v1h-1zM721 247h1v1h-1zM721 257h1v1h-1zM721 267h1v1h-1zM721 277h1v1h-1zM721 287h1v1h-1zM721 297h1v1h-1zM721 307h1v1h-1zM721 317h1v1h-1zM721 327h1v1h-1zM721 337h1v1h-1zM721 347h1v1h-1zM721 357h1v1h-1zM721 367h1v1h-1zM721 377h1v1h-1zM721 387h1v1h-1zM721 397h1v1h-1zM721 407h1v1h-1zM721 414h1v1h-1zM721 416h1v1h-1zM721 417h1v1h-1zM721 418h1v1h-1zM721 420h1v1h-1zM721 427h1v1h-1zM721 437h1v1h-1zM721 447h1v1h-1zM721 457h1v1h-1zM721 467h1v1h-1zM721 477h1v1h-1zM721 487h1v1h-1zM721 497h1v1h-1zM721 507h1v1h-1zM721 517h1v1h-1zM721 527h1v1h-1zM721 537h1v1h-1zM721 547h1v1h-1zM721 557h1v1h-1zM721 567h1v1h-1zM721 577h1v1h-1zM721 587h1v1h-1zM721 597h1v1h-1zM721 607h1v1h-1zM721 617h1v1h-1zM721 627h1v1h-1zM721 637h1v1h-1zM721 647h1v1h-1zM721 657h1v1h-1zM721 665h1v1h-1zM723 417h1v1h-1zM725 417h1v1h-1zM727 417h1v1h-1zM729 417h1v1h-1zM731 417h1v1h-1zM733 417h1v1h-1zM735 417h1v1h-1zM737 417h1v1h-1zM739 417h1v1h-1zM741 169h1v1h-1zM741 217h1v1h-1zM741 267h1v1h-1zM741 317h1v1h-1zM741 367h1v1h-1zM741 414h1v1h-1zM741 416h1v1h-1zM741 417h1v1h-1zM741 418h1v1h-1zM741 420h1v1h-1zM741 467h1v1h-1zM741 517h1v1h-1zM741 567h1v1h-1zM741 617h1v1h-1zM741 665h1v1h-1zM743 417h1v1h-1zM745 417h1v1h-1zM747 417h1v1h-1zM749 417h1v1h-1zM751 417h1v1h-1zM753 417h1v1h-1zM755 417h1v1h-1zM757 417h1v1h-1zM759 417h1v1h-1zM761 169h1v1h-1zM761 217h1v1h-1zM761 267h1v1h-1zM761 317h1v1h-1zM761 367h1v1h-1zM761 414h1v1h-1zM761 416h1v1h-1zM761 417h1v1h-1zM761 418h1v1h-1zM761 420h1v1h-1zM761 467h1v1h-1zM761 517h1v1h-1zM761 567h1v1h-1zM761 617h1v1h-1zM761 665h1v1h-1zM763 417h1v1h-1zM765 417h1v1h-1zM767 417h1v1h-1zM769 417h1v1h-1zM771 417h1v1h-1zM773 417h1v1h-1zM775 417h1v1h-1zM777 417h1v1h-1zM779 417h1v1h-1zM781 169h1v1h-1zM781 217h1v1h-1zM781 267h1v1h-1zM781 317h1v1h-1zM781 367h1v1h-1zM781 414h1v1h-1zM781 416h1v1h-1zM781 417h1v1h-1zM781 418h1v1h-1zM781 420h1v1h-1zM781 467h1v1h-1zM781 517h1v1h-1zM781 567h1v1h-1zM781 617h1v1h-1zM781 665h1v1h-1zM783 417h1v1h-1zM785 417h1v1h-1zM787 417h1v1h-1zM789 417h1v1h-1zM791 417h1v1h-1zM793 417h1v1h-1zM795 417h1v1h-1zM797 417h1v1h-1zM799 417h1v1h-1zM801 169h1v1h-1zM801 217h1v1h-1zM801 267h1v1h-1zM801 317h1v1h-1zM801 367h1v1h-1zM801 414h1v1h-1zM801 416h1v1h-1zM801 417h1v1h-1zM801 418h1v1h-1zM801 420h1v1h-1zM801 467h1v1h-1zM801 517h1v1h-1zM801 567h1v1h-1zM801 617h1v1h-1zM801 665h1v1h-1zM803 417h1v1h-1zM805 417h1v1h-1zM807 417h1v1h-1zM809 417h1v1h-1zM811 417h1v1h-1zM813 417h1v1h-1zM815 417h1v1h-1zM817 417h1v1h-1zM819 417h1v1h-1zM821 169h1v1h-1zM821 177h1v1h-1zM821 187h1v1h-1zM821 197h1v1h-1zM821 207h1v1h-1zM821 217h1v1h-1zM821 227h1v1h-1zM821 237h1v1h-1zM821 247h1v1h-1zM821 257h1v1h-1zM821 267h1v1h-1zM821 277h1v1h-1zM821 287h1v1h-1zM821 297h1v1h-1zM821 307h1v1h-1zM821 317h1v1h-1zM821 327h1v1h-1zM821 337h1v1h-1zM821 347h1v1h-1zM821 357h1v1h-1zM821 367h1v1h-1zM821 377h1v1h-1zM821 387h1v1h-1zM821 397h1v1h-1zM821 407h1v1h-1zM821 414h1v1h-1zM821 416h1v1h-1zM821 417h1v1h-1zM821 418h1v1h-1zM821 420h1v1h-1zM821 427h1v1h-1zM821 437h1v1h-1zM821 447h1v1h-1zM821 457h1v1h-1zM821 467h1v1h-1zM821 477h1v1h-1zM821 487h1v1h-1zM821 497h1v1h-1zM821 507h1v1h-1zM821 517h1v1h-1zM821 527h1v1h-1zM821 537h1v1h-1zM821 547h1v1h-1zM821 557h1v1h-1zM821 567h1v1h-1zM821 577h1v1h-1zM821 587h1v1h-1zM821 597h1v1h-1zM821 607h1v1h-1zM821 617h1v1h-1zM821 627h1v1h-1zM821 637h1v1h-1zM821 647h1v1h-1zM821 657h1v1h-1zM821 665h1v1h-1zM823 417h1v1h-1zM825 417h1v1h-1zM827 417h1v1h-1zM829 417h1v1h-1zM831 417h1v1h-1zM833 417h1v1h-1zM835 417h1v1h-1zM837 417h1v1h-1zM839 417h1v1h-1zM841 169h1v1h-1zM841 217h1v1h-1zM841 267h1v1h-1zM841 317h1v1h-1zM841 367h1v1h-1zM841 414h1v1h-1zM841 416h1v1h-1zM841 417h1v1h-1zM841 418h1v1h-1zM841 420h1v1h-1zM841 467h1v1h-1zM841 517h1v1h-1zM841 567h1v1h-1zM841 617h1v1h-1zM841 665h1v1h-1zM843 417h1v1h-1zM845 417h1v1h-1zM847 417h1v1h-1zM849 417h1v1h-1zM851 417h1v1h-1zM853 417h1v1h-1zM855 417h1v1h-1zM857 417h1v1h-1zM859 417h1v1h-1zM861 169h1v1h-1zM861 217h1v1h-1zM861 267h1v1h-1zM861 317h1v1h-1zM861 367h1v1h-1zM861 414h1v1h-1zM861 416h1v1h-1zM861 417h1v1h-1zM861 418h1v1h-1zM861 420h1v1h-1zM861 467h1v1h-1zM861 517h1v1h-1zM861 567h1v1h-1zM861 617h1v1h-1zM861 665h1v1h-1zM863 417h1v1h-1zM865 417h1v1h-1zM867 417h1v1h-1zM869 417h1v1h-1zM871 417h1v1h-1zM873 417h1v1h-1zM875 417h1v1h-1zM877 417h1v1h-1zM879 417h1v1h-1zM881 169h1v1h-1zM881 217h1v1h-1zM881 267h1v1h-1zM881 317h1v1h-1zM881 367h1v1h-1zM881 414h1v1h-1zM881 416h1v1h-1zM881 417h1v1h-1zM881 418h1v1h-1zM881 420h1v1h-1zM881 467h1v1h-1zM881 517h1v1h-1zM881 567h1v1h-1zM881 617h1v1h-1zM881 665h1v1h-1zM883 417h1v1h-1zM885 417h1v1h-1zM887 417h1v1h-1zM889 417h1v1h-1zM891 417h1v1h-1zM893 417h1v1h-1zM895 417h1v1h-1zM897 417h1v1h-1zM899 417h1v1h-1zM901 169h1v1h-1zM901 217h1v1h-1zM901 267h1v1h-1zM901 317h1v1h-1zM901 367h1v1h-1zM901 414h1v1h-1zM901 416h1v1h-1zM901 417h1v1h-1zM901 418h1v1h-1zM901 420h1v1h-1zM901 467h1v1h-1zM901 517h1v1h-1zM901 567h1v1h-1zM901 617h1v1h-1zM901 665h1v1h-1zM903 417h1v1h-1zM905 417h1v1h-1zM907 417h1v1h-1zM909 417h1v1h-1zM911 417h1v1h-1zM913 417h1v1h-1zM915 417h1v1h-1zM917 417h1v1h-1zM919 417h1v1h-1zM921 169h1v1h-1zM921 177h1v1h-1zM921 187h1v1h-1zM921 197h1v1h-1zM921 207h1v1h-1zM921 217h1v1h-1zM921 227h1v1h-1zM921 237h1v1h-1zM921 247h1v1h-1zM921 257h1v1h-1zM921 267h1v1h-1zM921 277h1v1h-1zM921 287h1v1h-1zM921 297h1v1h-1zM921 307h1v1h-1zM921 317h1v1h-1zM921 327h1v1h-1zM921 337h1v1h-1zM921 347h1v1h-1zM921 357h1v1h-1zM921 367h1v1h-1zM921 377h1v1h-1zM921 387h1v1h-1zM921 397h1v1h-1zM921 407h1v1h-1zM921 414h1v1h-1zM921 416h1v1h-1zM921 417h1v1h-1zM921 418h1v1h-1zM921 420h1v1h-1zM921 427h1v1h-1zM921 437h1v1h-1zM921 447h1v1h-1zM921 457h1v1h-1zM921 467h1v1h-1zM921 477h1v1h-1zM921 487h1v1h-1zM921 497h1v1h-1zM921 507h1v1h-1zM921 517h1v1h-1zM921 527h1v1h-1zM921 537h1v1h-1zM921 547h1v1h-1zM921 557h1v1h-1zM921 567h1v1h-1zM921 577h1v1h-1zM921 587h1v1h-1zM921 597h1v1h-1zM921 607h1v1h-1zM921 617h1v1h-1zM921 627h1v1h-1zM921 637h1v1h-1zM921 647h1v1h-1zM921 657h1v1h-1zM921 665h1v1h-1zM923 417h1v1h-1zM925 417h1v1h-1zM927 417h1v1h-1zM929 417h1v1h-1zM931 417h1v1h-1zM933 417h1v1h-1zM935 417h1v1h-1zM937 417h1v1h-1zM939 417h1v1h-1zM941 169h1v1h-1zM941 217h1v1h-1zM941 267h1v1h-1zM941 317h1v1h-1zM941 367h1v1h-1zM941 414h1v1h-1zM941 416h1v1h-1zM941 417h1v1h-1zM941 418h1v1h-1zM941 420h1v1h-1zM941 467h1v1h-1zM941 517h1v1h-1zM941 567h1v1h-1zM941 617h1v1h-1zM941 665h1v1h-1zM943 417h1v1h-1zM945 417h1v1h-1zM947 417h1v1h-1zM949 417h1v1h-1zM951 417h1v1h-1zM953 417h1v1h-1zM955 417h1v1h-1zM957 417h1v1h-1zM959 417h1v1h-1zM961 169h1v1h-1zM961 217h1v1h-1zM961 267h1v1h-1zM961 317h1v1h-1zM961 367h1v1h-1zM961 414h1v1h-1zM961 416h1v1h-1zM961 417h1v1h-1zM961 418h1v1h-1zM961 420h1v1h-1zM961 467h1v1h-1zM961 517h1v1h-1zM961 567h1v1h-1zM961 617h1v1h-1zM961 665h1v1h-1zM963 417h1v1h-1zM965 417h1v1h-1zM967 417h1v1h-1zM969 417h1v1h-1zM971 417h1v1h-1zM973 417h1v1h-1zM975 417h1v1h-1zM977 417h1v1h-1zM979 417h1v1h-1zM981 169h1v1h-1zM981 217h1v1h-1zM981 267h1v1h-1zM981 317h1v1h-1zM981 367h1v1h-1zM981 414h1v1h-1zM981 416h1v1h-1zM981 417h1v1h-1zM981 418h1v1h-1zM981 420h1v1h-1zM981 467h1v1h-1zM981 517h1v1h-1zM981 567h1v1h-1zM981 617h1v1h-1zM981 665h1v1h-1zM983 417h1v1h-1zM985 417h1v1h-1zM987 417h1v1h-1zM989 417h1v1h-1zM991 417h1v1h-1zM993 417h1v1h-1zM995 417h1v1h-1zM997 417h1v1h-1zM999 417h1v1h-1zM1001 169h1v1h-1zM1001 217h1v1h-1zM1001 267h1v1h-1zM1001 317h1v1h-1zM1001 367h1v1h-1zM1001 414h1v1h-1zM1001 416h1v1h-1zM1001 417h1v1h-1zM1001 418h1v1h-1zM1001 420h1v1h-1zM1001 467h1v1h-1zM1001 517h1v1h-1zM1001 567h1v1h-1zM1001 617h1v1h-1zM1001 665h1v1h-1zM1003 417h1v1h-1zM1005 417h1v1h-1zM1007 417h1v1h-1zM1009 417h1v1h-1zM1011 417h1v1h-1zM1013 417h1v1h-1zM1015 417h1v1h-1zM1017 417h1v1h-1zM1018 177h1v1h-1zM1018 187h1v1h-1zM1018 197h1v1h-1zM1018 207h1v1h-1zM1018 217h1v1h-1zM1018 227h1v1h-1zM1018 237h1v1h-1zM1018 247h1v1h-1zM1018 257h1v1h-1zM1018 267h1v1h-1zM1018 277h1v1h-1zM1018 287h1v1h-1zM1018 297h1v1h-1zM1018 307h1v1h-1zM1018 317h1v1h-1zM1018 327h1v1h-1zM1018 337h1v1h-1zM1018 347h1v1h-1zM1018 357h1v1h-1zM1018 367h1v1h-1zM1018 377h1v1h-1zM1018 387h1v1h-1zM1018 397h1v1h-1zM1018 407h1v1h-1zM1018 417h1v1h-1zM1018 427h1v1h-1zM1018 437h1v1h-1zM1018 447h1v1h-1zM1018 457h1v1h-1zM1018 467h1v1h-1zM1018 477h1v1h-1zM1018 487h1v1h-1zM1018 497h1v1h-1zM1018 507h1v1h-1zM1018 517h1v1h-1zM1018 527h1v1h-1zM1018 537h1v1h-1zM1018 547h1v1h-1zM1018 557h1v1h-1zM1018 567h1v1h-1zM1018 577h1v1h-1zM1018 587h1v1h-1zM1018 597h1v1h-1zM1018 607h1v1h-1zM1018 617h1v1h-1zM1018 627h1v1h-1zM1018 637h1v1h-1zM1018 647h1v1h-1zM1018 657h1v1h-1zM1019 417h1v1h-1zM1020 177h1v1h-1zM1020 187h1v1h-1zM1020 197h1v1h-1zM1020 207h1v1h-1zM1020 217h1v1h-1zM1020 227h1v1h-1zM1020 237h1v1h-1zM1020 247h1v1h-1zM1020 257h1v1h-1zM1020 267h1v1h-1zM1020 277h1v1h-1zM1020 287h1v1h-1zM1020 297h1v1h-1zM1020 307h1v1h-1zM1020 317h1v1h-1zM1020 327h1v1h-1zM1020 337h1v1h-1zM1020 347h1v1h-1zM1020 357h1v1h-1zM1020 367h1v1h-1zM1020 377h1v1h-1zM1020 387h1v1h-1zM1020 397h1v1h-1zM1020 407h1v1h-1zM1020 417h1v1h-1zM1020 427h1v1h-1zM1020 437h1v1h-1zM1020 447h1v1h-1zM1020 457h1v1h-1zM1020 467h1v1h-1zM1020 477h1v1h-1zM1020 487h1v1h-1zM1020 497h1v1h-1zM1020 507h1v1h-1zM1020 517h1v1h-1zM1020 527h1v1h-1zM1020 537h1v1h-1zM1020 547h1v1h-1zM1020 557h1v1h-1zM1020 567h1v1h-1zM1020 577h1v1h-1zM1020 587h1v1h-1zM1020 597h1v1h-1zM1020 607h1v1h-1zM1020 617h1v1h-1zM1020 627h1v1h-1zM1020 637h1v1h-1zM1020 647h1v1h-1zM1020 657h1v1h-1z" fill="#8c8c8c"/>
<line x1="20" y1="166.5" x2="1022" y2="166.5" stroke="#4a86c8" stroke-width="1"/>
<line x1="20.5" y1="166" x2="20.5" y2="669" stroke="#4a86c8" stroke-width="1"/>
<line x1="20" y1="668.5" x2="1022" y2="668.5" stroke="#4a86c8" stroke-width="1"/>
<path d="M41 167h1v1h-1z M41 667h1v1h-1zM61 167h1v1h-1z M61 667h1v1h-1zM81 167h1v1h-1z M81 667h1v1h-1zM101 167h1v1h-1z M101 667h1v1h-1zM121 167h1v1h-1z M121 667h1v1h-1zM141 167h1v1h-1z M141 667h1v1h-1zM161 167h1v1h-1z M161 667h1v1h-1zM181 167h1v1h-1z M181 667h1v1h-1zM201 167h1v1h-1z M201 667h1v1h-1zM221 167h1v1h-1z M221 667h1v1h-1zM241 167h1v1h-1z M241 667h1v1h-1zM261 167h1v1h-1z M261 667h1v1h-1zM281 167h1v1h-1z M281 667h1v1h-1zM301 167h1v1h-1z M301 667h1v1h-1zM321 167h1v1h-1z M321 667h1v1h-1zM341 167h1v1h-1z M341 667h1v1h-1zM361 167h1v1h-1z M361 667h1v1h-1zM381 167h1v1h-1z M381 667h1v1h-1zM401 167h1v1h-1z M401 667h1v1h-1zM421 167h1v1h-1z M421 667h1v1h-1zM441 167h1v1h-1z M441 667h1v1h-1zM461 167h1v1h-1z M461 667h1v1h-1zM481 167h1v1h-1z M481 667h1v1h-1zM501 167h1v1h-1z M501 667h1v1h-1zM521 167h1v1h-1z M521 667h1v1h-1zM541 167h1v1h-1z M541 667h1v1h-1zM561 167h1v1h-1z M561 667h1v1h-1zM581 167h1v1h-1z M581 667h1v1h-1zM601 167h1v1h-1z M601 667h1v1h-1zM621 167h1v1h-1z M621 667h1v1h-1zM641 167h1v1h-1z M641 667h1v1h-1zM661 167h1v1h-1z M661 667h1v1h-1zM681 167h1v1h-1z M681 667h1v1h-1zM701 167h1v1h-1z M701 667h1v1h-1zM721 167h1v1h-1z M721 667h1v1h-1zM741 167h1v1h-1z M741 667h1v1h-1zM761 167h1v1h-1z M761 667h1v1h-1zM781 167h1v1h-1z M781 667h1v1h-1zM801 167h1v1h-1z M801 667h1v1h-1zM821 167h1v1h-1z M821 667h1v1h-1zM841 167h1v1h-1z M841 667h1v1h-1zM861 167h1v1h-1z M861 667h1v1h-1zM881 167h1v1h-1z M881 667h1v1h-1zM901 167h1v1h-1z M901 667h1v1h-1zM921 167h1v1h-1z M921 667h1v1h-1zM941 167h1v1h-1z M941 667h1v1h-1zM961 167h1v1h-1z M961 667h1v1h-1zM981 167h1v1h-1z M981 667h1v1h-1zM1001 167h1v1h-1z M1001 667h1v1h-1z" fill="#4a86c8"/>
<path d="M21 169h1v4h-1zM21 177h1v4h-1zM21 185h1v4h-1zM21 193h1v4h-1zM21 201h1v4h-1zM21 209h1v4h-1zM21 217h1v4h-1zM21 225h1v4h-1zM21 233h1v4h-1zM21 241h1v4h-1zM21 249h1v4h-1zM21 257h1v4h-1zM21 265h1v4h-1zM21 273h1v4h-1zM21 281h1v4h-1zM21 289h1v4h-1zM21 297h1v4h-1zM21 305h1v4h-1zM21 313h1v4h-1zM21 321h1v4h-1zM21 329h1v4h-1zM21 337h1v4h-1zM21 345h1v4h-1zM21 353h1v4h-1zM21 361h1v4h-1zM21 369h1v4h-1zM21 377h1v4h-1zM21 385h1v4h-1zM21 393h1v4h-1zM21 401h1v4h-1zM21 409h1v4h-1zM21 417h1v4h-1zM21 425h1v4h-1zM21 433h1v4h-1zM21 441h1v4h-1zM21 449h1v4h-1zM21 457h1v4h-1zM21 465h1v4h-1zM21 473h1v4h-1zM21 481h1v4h-1zM21 489h1v4h-1zM21 497h1v4h-1zM21 505h1v4h-1zM21 513h1v4h-1zM21 521h1v4h-1zM21 529h1v4h-1zM21 537h1v4h-1zM21 545h1v4h-1zM21 553h1v4h-1zM21 561h1v4h-1zM21 569h1v4h-1zM21 577h1v4h-1zM21 585h1v4h-1zM21 593h1v4h-1zM21 601h1v4h-1zM21 609h1v4h-1zM21 617h1v4h-1zM21 625h1v4h-1zM21 633h1v4h-1zM21 641h1v4h-1zM21 649h1v4h-1zM21 657h1v4h-1zM21 665h1v4h-1z" fill="#9ad0ff"/>
<line x1="1021.5" y1="167" x2="1021.5" y2="668" stroke="#808080" stroke-width="1"/>
<path d="M1021 169h1v4h-1zM1021 177h1v4h-1zM1021 185h1v4h-1zM1021 193h1v4h-1zM1021 201h1v4h-1zM1021 209h1v4h-1zM1021 217h1v4h-1zM1021 225h1v4h-1zM1021 233h1v4h-1zM1021 241h1v4h-1zM1021 249h1v4h-1zM1021 257h1v4h-1zM1021 265h1v4h-1zM1021 273h1v4h-1zM1021 281h1v4h-1zM1021 289h1v4h-1zM1021 297h1v4h-1zM1021 305h1v4h-1zM1021 313h1v4h-1zM1021 321h1v4h-1zM1021 329h1v4h-1zM1021 337h1v4h-1zM1021 345h1v4h-1zM1021 353h1v4h-1zM1021 361h1v4h-1zM1021 369h1v4h-1zM1021 377h1v4h-1zM1021 385h1v4h-1zM1021 393h1v4h-1zM1021 401h1v4h-1zM1021 409h1v4h-1zM1021 417h1v4h-1zM1021 425h1v4h-1zM1021 433h1v4h-1zM1021 441h1v4h-1zM1021 449h1v4h-1zM1021 457h1v4h-1zM1021 465h1v4h-1zM1021 473h1v4h-1zM1021 481h1v4h-1zM1021 489h1v4h-1zM1021 497h1v4h-1zM1021 505h1v4h-1zM1021 513h1v4h-1zM1021 521h1v4h-1zM1021 529h1v4h-1zM1021 537h1v4h-1zM1021 545h1v4h-1zM1021 553h1v4h-1zM1021 561h1v4h-1zM1021 569h1v4h-1zM1021 577h1v4h-1zM1021 585h1v4h-1zM1021 593h1v4h-1zM1021 601h1v4h-1zM1021 609h1v4h-1zM1021 617h1v4h-1zM1021 625h1v4h-1zM1021 633h1v4h-1zM1021 641h1v4h-1zM1021 649h1v4h-1zM1021 657h1v4h-1zM1021 665h1v4h-1z" fill="#f0f0f0"/>
<path d="M21.0 369.8 L362.0 369.8 L366.0 368.8" stroke="#064a06" stroke-width="10" fill="none"/>
<path d="M382.5 265.0 L390.0 264.8 L400.0 265.2 L650.0 267.6 L1021.0 269.3" stroke="#064a06" stroke-width="10" fill="none"/>
<path d="M21 364.6h1v3h-1zM22 364.6h1v3h-1zM22 372.3h1v2.1h-1zM25 364.6h1v3h-1zM26 364.6h1v3h-1zM26 372.3h1v2.1h-1zM27 364.6h1v3h-1zM28 364.6h1v3h-1zM29 372.3h1v2.3h-1zM30 372.3h1v2.1h-1zM31 364.6h1v3h-1zM32 372.3h1v3.9h-1zM33 364.6h1v3h-1zM36 364.6h1v3h-1zM37 364.6h1v3h-1zM39 364.6h1v3h-1zM41 364.6h1v3h-1zM43 364.6h1v3h-1zM44 364.6h1v3h-1zM45 364.6h1v3h-1zM48 364.6h1v3h-1zM49 372.3h1v3.0h-1zM50 364.6h1v3h-1zM51 364.6h1v3h-1zM53 364.6h1v3h-1zM54 364.6h1v3h-1zM55 364.6h1v3h-1zM56 364.6h1v3h-1zM57 364.6h1v3h-1zM59 364.6h1v3h-1zM60 364.6h1v3h-1zM61 364.6h1v3h-1zM63 364.6h1v3h-1zM66 364.6h1v3h-1zM67 364.6h1v3h-1zM69 364.6h1v3h-1zM70 364.6h1v3h-1zM71 364.6h1v3h-1zM72 364.6h1v3h-1zM74 364.6h1v3h-1zM76 364.6h1v3h-1zM77 364.6h1v3h-1zM78 364.6h1v3h-1zM79 364.6h1v3h-1zM81 364.6h1v3h-1zM83 364.6h1v3h-1zM88 364.6h1v3h-1zM89 364.6h1v3h-1zM90 372.3h1v3.3h-1zM91 364.6h1v3h-1zM91 372.3h1v2.3h-1zM92 364.6h1v3h-1zM93 364.6h1v3h-1zM93 372.3h1v3.8h-1zM94 364.6h1v3h-1zM95 364.6h1v3h-1zM95 372.3h1v3.7h-1zM96 364.6h1v3h-1zM98 364.6h1v3h-1zM99 372.3h1v2.5h-1zM101 364.6h1v3h-1zM105 364.6h1v3h-1zM105 372.3h1v2.2h-1zM106 364.6h1v3h-1zM108 364.6h1v3h-1zM109 372.3h1v3.7h-1zM110 364.6h1v3h-1zM110 372.3h1v3.7h-1zM111 364.6h1v3h-1zM113 364.6h1v3h-1zM113 372.3h1v3.7h-1zM114 372.3h1v2.5h-1zM115 364.6h1v3h-1zM116 372.3h1v2.7h-1zM118 364.6h1v3h-1zM119 364.6h1v3h-1zM120 364.6h1v3h-1zM122 372.3h1v3.0h-1zM125 364.6h1v3h-1zM126 364.6h1v3h-1zM126 372.3h1v3.8h-1zM128 364.6h1v3h-1zM128 372.3h1v2.6h-1zM129 364.6h1v3h-1zM132 364.6h1v3h-1zM133 364.6h1v3h-1zM134 364.6h1v3h-1zM136 364.6h1v3h-1zM138 364.6h1v3h-1zM144 364.6h1v3h-1zM147 364.6h1v3h-1zM148 364.6h1v3h-1zM149 364.6h1v3h-1zM150 364.6h1v3h-1zM150 372.3h1v3.1h-1zM151 364.6h1v3h-1zM152 364.6h1v3h-1zM153 364.6h1v3h-1zM154 364.6h1v3h-1zM154 372.3h1v2.6h-1zM156 372.3h1v2.9h-1zM158 364.6h1v3h-1zM160 372.3h1v3.8h-1zM161 364.6h1v3h-1zM162 364.6h1v3h-1zM163 364.6h1v3h-1zM163 372.3h1v3.7h-1zM164 372.3h1v2.2h-1zM165 364.6h1v3h-1zM166 364.6h1v3h-1zM167 364.6h1v3h-1zM169 364.6h1v3h-1zM170 372.3h1v2.6h-1zM172 364.6h1v3h-1zM173 364.6h1v3h-1zM174 372.3h1v2.7h-1zM175 372.3h1v2.1h-1zM177 372.3h1v3.0h-1zM178 372.3h1v2.4h-1zM179 364.6h1v3h-1zM179 372.3h1v2.2h-1zM183 364.6h1v3h-1zM184 364.6h1v3h-1zM185 364.6h1v3h-1zM186 364.6h1v3h-1zM188 364.6h1v3h-1zM189 364.6h1v3h-1zM189 372.3h1v3.4h-1zM190 364.6h1v3h-1zM191 364.6h1v3h-1zM192 364.6h1v3h-1zM193 364.6h1v3h-1zM194 364.6h1v3h-1zM194 372.3h1v2.1h-1zM196 372.3h1v3.0h-1zM197 364.6h1v3h-1zM198 364.6h1v3h-1zM200 364.6h1v3h-1zM200 372.3h1v3.3h-1zM201 372.3h1v3.3h-1zM203 364.6h1v3h-1zM204 364.6h1v3h-1zM205 364.6h1v3h-1zM207 364.6h1v3h-1zM207 372.3h1v2.0h-1zM208 364.6h1v3h-1zM210 364.6h1v3h-1zM213 364.6h1v3h-1zM214 364.6h1v3h-1zM215 372.3h1v3.5h-1zM216 364.6h1v3h-1zM216 372.3h1v2.9h-1zM218 364.6h1v3h-1zM218 372.3h1v3.3h-1zM220 364.6h1v3h-1zM220 372.3h1v2.9h-1zM221 364.6h1v3h-1zM222 364.6h1v3h-1zM225 364.6h1v3h-1zM226 364.6h1v3h-1zM227 364.6h1v3h-1zM229 364.6h1v3h-1zM229 372.3h1v2.1h-1zM232 364.6h1v3h-1zM236 364.6h1v3h-1zM236 372.3h1v3.9h-1zM237 364.6h1v3h-1zM238 364.6h1v3h-1zM239 364.6h1v3h-1zM240 364.6h1v3h-1zM242 364.6h1v3h-1zM244 364.6h1v3h-1zM245 372.3h1v2.3h-1zM248 364.6h1v3h-1zM250 364.6h1v3h-1zM251 364.6h1v3h-1zM252 364.6h1v3h-1zM254 364.6h1v3h-1zM254 372.3h1v3.8h-1zM255 372.3h1v4.0h-1zM258 364.6h1v3h-1zM259 364.6h1v3h-1zM262 364.6h1v3h-1zM264 364.6h1v3h-1zM264 372.3h1v2.8h-1zM265 364.6h1v3h-1zM266 364.6h1v3h-1zM266 372.3h1v2.8h-1zM267 364.6h1v3h-1zM269 364.6h1v3h-1zM270 364.6h1v3h-1zM270 372.3h1v3.6h-1zM271 364.6h1v3h-1zM272 364.6h1v3h-1zM276 364.6h1v3h-1zM276 372.3h1v2.6h-1zM277 364.6h1v3h-1zM278 372.3h1v2.4h-1zM280 364.6h1v3h-1zM282 364.6h1v3h-1zM283 364.6h1v3h-1zM284 364.6h1v3h-1zM285 364.6h1v3h-1zM286 364.6h1v3h-1zM286 372.3h1v2.1h-1zM287 364.6h1v3h-1zM288 364.6h1v3h-1zM291 372.3h1v2.6h-1zM292 364.6h1v3h-1zM292 372.3h1v3.8h-1zM293 364.6h1v3h-1zM293 372.3h1v3.7h-1zM294 364.6h1v3h-1zM295 372.3h1v3.9h-1zM296 372.3h1v3.1h-1zM297 364.6h1v3h-1zM298 364.6h1v3h-1zM300 364.6h1v3h-1zM300 372.3h1v2.6h-1zM301 364.6h1v3h-1zM301 372.3h1v3.5h-1zM302 364.6h1v3h-1zM304 364.6h1v3h-1zM305 364.6h1v3h-1zM306 364.6h1v3h-1zM308 364.6h1v3h-1zM309 372.3h1v3.7h-1zM310 364.6h1v3h-1zM311 364.6h1v3h-1zM314 364.6h1v3h-1zM314 372.3h1v3.9h-1zM315 364.6h1v3h-1zM316 364.6h1v3h-1zM317 364.6h1v3h-1zM318 364.6h1v3h-1zM320 364.6h1v3h-1zM321 364.6h1v3h-1zM321 372.3h1v3.1h-1zM322 364.6h1v3h-1zM323 364.6h1v3h-1zM323 372.3h1v2.9h-1zM324 364.6h1v3h-1zM324 372.3h1v3.0h-1zM327 372.3h1v3.5h-1zM329 364.6h1v3h-1zM330 364.6h1v3h-1zM331 364.6h1v3h-1zM331 372.3h1v3.7h-1zM332 372.3h1v3.3h-1zM333 364.6h1v3h-1zM334 364.6h1v3h-1zM336 364.6h1v3h-1zM337 364.6h1v3h-1zM338 364.6h1v3h-1zM338 372.3h1v3.7h-1zM339 364.6h1v3h-1zM340 364.6h1v3h-1zM343 364.6h1v3h-1zM343 372.3h1v3.3h-1zM344 372.3h1v2.6h-1zM345 364.6h1v3h-1zM346 364.6h1v3h-1zM348 364.6h1v3h-1zM350 364.6h1v3h-1zM351 372.3h1v3.3h-1zM352 364.6h1v3h-1zM353 372.3h1v3.4h-1zM354 364.6h1v3h-1zM355 364.6h1v3h-1zM356 372.3h1v2.7h-1zM357 364.6h1v3h-1zM361 364.6h1v3h-1zM362 364.6h1v3h-1zM362 372.3h1v3.6h-1zM363 364.4h1v3h-1zM364 364.1h1v3h-1zM365 363.9h1v3h-1zM366 363.6h1v3h-1zM383 259.8h1v3h-1zM386 259.7h1v3h-1zM387 259.7h1v3h-1zM388 259.7h1v3h-1zM388 267.4h1v2.5h-1zM389 259.6h1v3h-1zM390 267.3h1v2.2h-1zM392 259.7h1v3h-1zM394 259.8h1v3h-1zM395 259.8h1v3h-1zM397 267.6h1v3.9h-1zM398 259.9h1v3h-1zM399 260.0h1v3h-1zM401 260.0h1v3h-1zM402 260.0h1v3h-1zM403 260.0h1v3h-1zM404 260.0h1v3h-1zM405 260.0h1v3h-1zM406 267.8h1v2.2h-1zM407 260.1h1v3h-1zM408 260.1h1v3h-1zM409 260.1h1v3h-1zM410 260.1h1v3h-1zM411 260.1h1v3h-1zM411 267.8h1v4.0h-1zM412 267.8h1v3.7h-1zM415 267.8h1v2.2h-1zM416 260.2h1v3h-1zM416 267.9h1v2.5h-1zM417 260.2h1v3h-1zM417 267.9h1v2.7h-1zM418 260.2h1v3h-1zM418 267.9h1v3.9h-1zM420 260.2h1v3h-1zM422 260.2h1v3h-1zM424 260.2h1v3h-1zM426 260.2h1v3h-1zM427 260.3h1v3h-1zM428 260.3h1v3h-1zM430 260.3h1v3h-1zM431 260.3h1v3h-1zM432 260.3h1v3h-1zM434 268.0h1v3.9h-1zM435 260.3h1v3h-1zM436 260.3h1v3h-1zM437 260.4h1v3h-1zM437 268.1h1v2.0h-1zM438 260.4h1v3h-1zM439 260.4h1v3h-1zM440 260.4h1v3h-1zM441 260.4h1v3h-1zM442 260.4h1v3h-1zM444 260.4h1v3h-1zM445 260.4h1v3h-1zM447 268.2h1v3.7h-1zM449 260.5h1v3h-1zM451 260.5h1v3h-1zM451 268.2h1v2.8h-1zM452 260.5h1v3h-1zM452 268.2h1v2.8h-1zM453 268.2h1v3.7h-1zM454 260.5h1v3h-1zM455 260.5h1v3h-1zM457 260.5h1v3h-1zM458 260.6h1v3h-1zM459 268.3h1v3.5h-1zM461 260.6h1v3h-1zM463 260.6h1v3h-1zM466 260.6h1v3h-1zM468 268.4h1v2.5h-1zM470 260.7h1v3h-1zM473 260.7h1v3h-1zM474 260.7h1v3h-1zM475 260.7h1v3h-1zM475 268.4h1v2.1h-1zM476 260.7h1v3h-1zM477 260.7h1v3h-1zM478 268.4h1v2.4h-1zM479 260.8h1v3h-1zM481 260.8h1v3h-1zM482 268.5h1v2.7h-1zM483 260.8h1v3h-1zM483 268.5h1v2.6h-1zM484 260.8h1v3h-1zM485 260.8h1v3h-1zM488 260.8h1v3h-1zM489 260.9h1v3h-1zM490 260.9h1v3h-1zM490 268.6h1v3.1h-1zM491 260.9h1v3h-1zM493 268.6h1v2.0h-1zM496 260.9h1v3h-1zM496 268.6h1v2.1h-1zM497 260.9h1v3h-1zM498 260.9h1v3h-1zM500 261.0h1v3h-1zM500 268.7h1v3.2h-1zM501 261.0h1v3h-1zM502 261.0h1v3h-1zM502 268.7h1v2.2h-1zM504 261.0h1v3h-1zM507 261.0h1v3h-1zM508 261.0h1v3h-1zM508 268.7h1v3.3h-1zM510 261.1h1v3h-1zM510 268.8h1v3.2h-1zM511 261.1h1v3h-1zM512 261.1h1v3h-1zM513 261.1h1v3h-1zM513 268.8h1v2.5h-1zM514 261.1h1v3h-1zM514 268.8h1v3.2h-1zM515 261.1h1v3h-1zM515 268.8h1v3.7h-1zM516 261.1h1v3h-1zM517 261.1h1v3h-1zM518 268.8h1v3.4h-1zM520 261.2h1v3h-1zM521 268.9h1v3.7h-1zM522 261.2h1v3h-1zM522 268.9h1v2.8h-1zM523 261.2h1v3h-1zM524 261.2h1v3h-1zM525 261.2h1v3h-1zM526 261.2h1v3h-1zM529 261.2h1v3h-1zM530 261.2h1v3h-1zM531 261.3h1v3h-1zM531 269.0h1v3.6h-1zM532 261.3h1v3h-1zM532 269.0h1v2.4h-1zM533 261.3h1v3h-1zM534 261.3h1v3h-1zM536 261.3h1v3h-1zM537 261.3h1v3h-1zM538 261.3h1v3h-1zM539 261.3h1v3h-1zM542 261.4h1v3h-1zM544 261.4h1v3h-1zM545 261.4h1v3h-1zM546 269.1h1v3.7h-1zM548 261.4h1v3h-1zM549 261.4h1v3h-1zM549 269.1h1v3.4h-1zM551 261.4h1v3h-1zM551 269.1h1v3.8h-1zM552 261.5h1v3h-1zM554 261.5h1v3h-1zM555 261.5h1v3h-1zM557 261.5h1v3h-1zM558 261.5h1v3h-1zM560 269.2h1v2.7h-1zM562 269.3h1v3.4h-1zM563 261.6h1v3h-1zM564 261.6h1v3h-1zM565 261.6h1v3h-1zM566 261.6h1v3h-1zM567 261.6h1v3h-1zM568 261.6h1v3h-1zM569 261.6h1v3h-1zM570 261.6h1v3h-1zM571 261.6h1v3h-1zM573 261.7h1v3h-1zM574 261.7h1v3h-1zM576 269.4h1v3.5h-1zM580 269.4h1v2.6h-1zM585 261.8h1v3h-1zM587 261.8h1v3h-1zM593 261.9h1v3h-1zM595 261.9h1v3h-1zM595 269.6h1v3.6h-1zM596 261.9h1v3h-1zM597 269.6h1v2.7h-1zM598 261.9h1v3h-1zM599 261.9h1v3h-1zM600 261.9h1v3h-1zM601 269.6h1v3.4h-1zM602 261.9h1v3h-1zM603 269.6h1v3.4h-1zM604 262.0h1v3h-1zM605 269.7h1v2.8h-1zM607 262.0h1v3h-1zM609 262.0h1v3h-1zM610 262.0h1v3h-1zM611 262.0h1v3h-1zM612 262.0h1v3h-1zM612 269.7h1v2.6h-1zM613 269.7h1v2.9h-1zM614 262.1h1v3h-1zM615 262.1h1v3h-1zM615 269.8h1v2.9h-1zM620 262.1h1v3h-1zM621 262.1h1v3h-1zM622 262.1h1v3h-1zM625 262.2h1v3h-1zM626 262.2h1v3h-1zM627 262.2h1v3h-1zM630 262.2h1v3h-1zM631 262.2h1v3h-1zM632 262.2h1v3h-1zM633 262.2h1v3h-1zM634 262.2h1v3h-1zM636 262.3h1v3h-1zM636 270.0h1v3.6h-1zM638 262.3h1v3h-1zM638 270.0h1v2.4h-1zM639 262.3h1v3h-1zM641 270.0h1v2.5h-1zM642 262.3h1v3h-1zM643 262.3h1v3h-1zM645 262.4h1v3h-1zM646 262.4h1v3h-1zM648 262.4h1v3h-1zM648 270.1h1v2.1h-1zM650 262.4h1v3h-1zM650 270.1h1v3.9h-1zM651 262.4h1v3h-1zM652 262.4h1v3h-1zM652 270.1h1v3.6h-1zM654 262.4h1v3h-1zM655 262.4h1v3h-1zM656 262.4h1v3h-1zM657 262.4h1v3h-1zM658 270.1h1v3.6h-1zM661 262.5h1v3h-1zM662 270.2h1v3.7h-1zM663 262.5h1v3h-1zM666 262.5h1v3h-1zM667 262.5h1v3h-1zM668 262.5h1v3h-1zM669 262.5h1v3h-1zM670 262.5h1v3h-1zM671 262.5h1v3h-1zM672 262.5h1v3h-1zM673 270.2h1v3.3h-1zM675 262.5h1v3h-1zM679 270.2h1v3.0h-1zM680 262.5h1v3h-1zM683 262.6h1v3h-1zM684 262.6h1v3h-1zM685 262.6h1v3h-1zM686 262.6h1v3h-1zM688 262.6h1v3h-1zM688 270.3h1v3.4h-1zM690 262.6h1v3h-1zM690 270.3h1v3.8h-1zM691 262.6h1v3h-1zM692 262.6h1v3h-1zM692 270.3h1v3.5h-1zM693 262.6h1v3h-1zM695 270.3h1v2.5h-1zM696 262.6h1v3h-1zM697 262.6h1v3h-1zM698 262.6h1v3h-1zM699 262.6h1v3h-1zM700 262.6h1v3h-1zM701 262.6h1v3h-1zM702 262.6h1v3h-1zM703 270.3h1v4.0h-1zM704 262.6h1v3h-1zM705 262.7h1v3h-1zM705 270.4h1v2.5h-1zM706 262.7h1v3h-1zM709 262.7h1v3h-1zM711 262.7h1v3h-1zM711 270.4h1v4.0h-1zM712 262.7h1v3h-1zM713 262.7h1v3h-1zM714 262.7h1v3h-1zM718 262.7h1v3h-1zM719 262.7h1v3h-1zM720 262.7h1v3h-1zM721 262.7h1v3h-1zM722 262.7h1v3h-1zM724 262.7h1v3h-1zM725 262.7h1v3h-1zM726 262.7h1v3h-1zM727 262.8h1v3h-1zM729 270.5h1v2.8h-1zM730 262.8h1v3h-1zM731 262.8h1v3h-1zM732 262.8h1v3h-1zM732 270.5h1v3.4h-1zM734 262.8h1v3h-1zM734 270.5h1v2.9h-1zM735 262.8h1v3h-1zM735 270.5h1v3.6h-1zM737 270.5h1v2.1h-1zM739 262.8h1v3h-1zM740 262.8h1v3h-1zM744 262.8h1v3h-1zM746 262.8h1v3h-1zM748 262.8h1v3h-1zM750 262.9h1v3h-1zM750 270.6h1v3.4h-1zM751 262.9h1v3h-1zM753 262.9h1v3h-1zM753 270.6h1v3.8h-1zM754 262.9h1v3h-1zM755 262.9h1v3h-1zM759 262.9h1v3h-1zM760 262.9h1v3h-1zM762 262.9h1v3h-1zM762 270.6h1v2.9h-1zM764 262.9h1v3h-1zM764 270.6h1v2.5h-1zM765 262.9h1v3h-1zM765 270.6h1v2.1h-1zM766 262.9h1v3h-1zM767 262.9h1v3h-1zM768 262.9h1v3h-1zM769 270.6h1v2.6h-1zM770 262.9h1v3h-1zM771 270.7h1v3.0h-1zM773 263.0h1v3h-1zM774 270.7h1v3.2h-1zM776 263.0h1v3h-1zM777 270.7h1v2.6h-1zM779 263.0h1v3h-1zM780 270.7h1v2.0h-1zM781 263.0h1v3h-1zM783 263.0h1v3h-1zM785 263.0h1v3h-1zM786 263.0h1v3h-1zM788 263.0h1v3h-1zM788 270.7h1v3.3h-1zM791 263.0h1v3h-1zM792 263.1h1v3h-1zM793 263.1h1v3h-1zM793 270.8h1v3.6h-1zM794 270.8h1v3.3h-1zM795 263.1h1v3h-1zM797 263.1h1v3h-1zM798 263.1h1v3h-1zM799 263.1h1v3h-1zM803 263.1h1v3h-1zM804 263.1h1v3h-1zM805 263.1h1v3h-1zM807 263.1h1v3h-1zM808 263.1h1v3h-1zM809 263.1h1v3h-1zM811 263.1h1v3h-1zM812 263.1h1v3h-1zM813 263.1h1v3h-1zM814 270.9h1v2.0h-1zM816 263.2h1v3h-1zM817 263.2h1v3h-1zM820 263.2h1v3h-1zM822 263.2h1v3h-1zM823 263.2h1v3h-1zM823 270.9h1v3.7h-1zM824 263.2h1v3h-1zM826 263.2h1v3h-1zM826 270.9h1v3.6h-1zM828 263.2h1v3h-1zM829 263.2h1v3h-1zM830 263.2h1v3h-1zM832 263.2h1v3h-1zM833 263.2h1v3h-1zM834 263.2h1v3h-1zM836 263.3h1v3h-1zM838 263.3h1v3h-1zM840 263.3h1v3h-1zM841 263.3h1v3h-1zM841 271.0h1v3.2h-1zM842 263.3h1v3h-1zM843 271.0h1v3.8h-1zM844 263.3h1v3h-1zM844 271.0h1v3.9h-1zM846 263.3h1v3h-1zM847 263.3h1v3h-1zM848 263.3h1v3h-1zM849 263.3h1v3h-1zM850 271.0h1v3.9h-1zM852 263.3h1v3h-1zM852 271.0h1v3.4h-1zM853 263.3h1v3h-1zM854 271.0h1v2.1h-1zM856 263.3h1v3h-1zM857 263.3h1v3h-1zM858 263.4h1v3h-1zM859 263.4h1v3h-1zM861 263.4h1v3h-1zM862 263.4h1v3h-1zM862 271.1h1v3.5h-1zM865 263.4h1v3h-1zM869 263.4h1v3h-1zM870 263.4h1v3h-1zM871 263.4h1v3h-1zM874 263.4h1v3h-1zM876 263.4h1v3h-1zM877 263.4h1v3h-1zM879 263.4h1v3h-1zM879 271.1h1v4.0h-1zM880 263.5h1v3h-1zM881 271.2h1v3.6h-1zM885 263.5h1v3h-1zM886 263.5h1v3h-1zM887 263.5h1v3h-1zM888 263.5h1v3h-1zM889 263.5h1v3h-1zM890 271.2h1v3.3h-1zM891 263.5h1v3h-1zM894 263.5h1v3h-1zM895 263.5h1v3h-1zM897 263.5h1v3h-1zM898 263.5h1v3h-1zM900 263.5h1v3h-1zM901 263.6h1v3h-1zM902 271.3h1v3.0h-1zM903 263.6h1v3h-1zM903 271.3h1v3.0h-1zM905 263.6h1v3h-1zM906 263.6h1v3h-1zM907 263.6h1v3h-1zM908 263.6h1v3h-1zM909 263.6h1v3h-1zM910 263.6h1v3h-1zM911 263.6h1v3h-1zM912 263.6h1v3h-1zM912 271.3h1v2.3h-1zM916 263.6h1v3h-1zM919 263.6h1v3h-1zM920 263.6h1v3h-1zM922 263.6h1v3h-1zM922 271.3h1v2.4h-1zM923 271.4h1v2.9h-1zM924 263.7h1v3h-1zM926 271.4h1v3.1h-1zM928 263.7h1v3h-1zM929 263.7h1v3h-1zM929 271.4h1v2.8h-1zM930 263.7h1v3h-1zM931 263.7h1v3h-1zM932 263.7h1v3h-1zM934 263.7h1v3h-1zM935 263.7h1v3h-1zM935 271.4h1v3.7h-1zM936 263.7h1v3h-1zM936 271.4h1v3.0h-1zM938 263.7h1v3h-1zM939 263.7h1v3h-1zM942 263.7h1v3h-1zM943 263.7h1v3h-1zM944 263.7h1v3h-1zM944 271.4h1v4.0h-1zM945 263.8h1v3h-1zM946 263.8h1v3h-1zM946 271.5h1v2.8h-1zM948 263.8h1v3h-1zM950 263.8h1v3h-1zM951 263.8h1v3h-1zM952 263.8h1v3h-1zM952 271.5h1v2.4h-1zM955 263.8h1v3h-1zM956 263.8h1v3h-1zM958 271.5h1v2.1h-1zM960 263.8h1v3h-1zM961 263.8h1v3h-1zM962 263.8h1v3h-1zM965 263.8h1v3h-1zM965 271.5h1v3.7h-1zM966 263.8h1v3h-1zM966 271.5h1v3.8h-1zM968 263.9h1v3h-1zM969 271.6h1v2.4h-1zM972 263.9h1v3h-1zM974 263.9h1v3h-1zM975 263.9h1v3h-1zM975 271.6h1v2.4h-1zM977 263.9h1v3h-1zM979 263.9h1v3h-1zM979 271.6h1v2.9h-1zM983 263.9h1v3h-1zM984 263.9h1v3h-1zM987 263.9h1v3h-1zM989 264.0h1v3h-1zM989 271.7h1v2.4h-1zM990 264.0h1v3h-1zM991 264.0h1v3h-1zM994 264.0h1v3h-1zM995 264.0h1v3h-1zM997 264.0h1v3h-1zM998 264.0h1v3h-1zM1000 264.0h1v3h-1zM1002 264.0h1v3h-1zM1003 264.0h1v3h-1zM1003 271.7h1v2.0h-1zM1004 264.0h1v3h-1zM1004 271.7h1v2.6h-1zM1005 264.0h1v3h-1zM1006 264.0h1v3h-1zM1007 264.0h1v3h-1zM1007 271.7h1v3.7h-1zM1009 264.0h1v3h-1zM1010 264.0h1v3h-1zM1010 271.7h1v2.8h-1zM1011 264.1h1v3h-1zM1011 271.8h1v3.2h-1zM1012 264.1h1v3h-1zM1013 264.1h1v3h-1zM1014 264.1h1v3h-1zM1016 271.8h1v2.0h-1zM1018 264.1h1v3h-1zM1019 264.1h1v3h-1zM1020 264.1h1v3h-1z" fill="#0c860c"/>
<path d="M21.0 369.8 L362.0 369.8 L366.0 368.8" stroke="#14dc14" stroke-width="4.5" fill="none"/>
<path d="M382.5 265.0 L390.0 264.8 L400.0 265.2 L650.0 267.6 L1021.0 269.3" stroke="#14dc14" stroke-width="5" fill="none"/>
<path d="M356.0 369.8 L362.0 369.3 L366.0 367.5 L370.0 362.0 L373.0 350.0 L376.0 330.0 L378.0 312.0 L380.0 292.0 L381.0 275.0 L382.5 265.0" stroke="#0a8a0a" stroke-width="4" fill="none" stroke-opacity="0.6" stroke-linejoin="round"/>
<path d="M356.0 369.8 L362.0 369.3 L366.0 367.5 L370.0 362.0 L373.0 350.0 L376.0 330.0 L378.0 312.0 L380.0 292.0 L381.0 275.0 L382.5 265.0" stroke="#14dc14" stroke-width="2" fill="none" stroke-linejoin="round"/>
<path d="M21.0 416.5 L90.8 416.5 L160.5 416.5 L230.2 416.5 L300.0 416.5 L317.0 416.5 L334.0 416.4 L351.0 416.4 L368.0 416.5 L369.0 416.4 L370.0 416.3 L371.0 416.2 L372.0 416.2 L373.0 416.5 L374.0 417.0 L375.0 417.8 L376.0 419.0 L377.0 420.3 L378.0 421.7 L379.0 423.3 L380.0 425.0 L381.0 427.0 L382.0 429.4 L383.0 432.0 L384.0 434.5 L385.0 436.7 L386.0 438.3 L387.0 439.0 L388.0 438.8 L389.0 437.7 L390.0 436.2 L391.0 434.2 L392.0 432.0 L393.0 429.9 L394.0 428.0 L395.0 426.1 L396.0 423.9 L397.0 421.6 L398.0 419.2 L399.0 417.1 L400.0 415.2 L401.0 413.8 L402.0 413.0 L403.0 412.8 L404.0 413.0 L405.0 413.6 L406.0 414.4 L407.0 415.5 L408.0 416.6 L409.0 417.8 L410.0 419.0 L411.0 420.0 L412.0 421.0 L413.0 422.3 L414.0 423.6 L415.0 425.0 L416.0 426.3 L417.0 427.5 L418.0 428.5 L419.0 429.2 L420.0 429.5 L421.0 429.4 L422.0 428.8 L423.0 427.8 L424.0 426.6 L425.0 425.4 L426.0 424.1 L427.0 422.9 L428.0 422.0 L429.0 421.2 L430.0 420.4 L431.0 419.6 L432.0 418.8 L433.0 418.2 L434.0 417.6 L435.0 417.2 L436.0 417.0 L437.0 417.0 L438.0 417.1 L439.0 417.4 L440.0 417.8 L441.0 418.3 L442.0 418.9 L443.0 419.5 L444.0 420.0 L445.0 420.6 L446.0 421.4 L447.0 422.3 L448.0 423.2 L449.0 424.1 L450.0 424.8 L451.0 425.3 L452.0 425.5 L453.0 425.4 L454.0 425.0 L455.0 424.4 L456.0 423.7 L457.0 422.9 L458.0 422.1 L459.0 421.5 L460.0 421.0 L461.1 420.6 L462.1 420.3 L463.2 420.0 L464.2 419.8 L465.3 419.6 L466.4 419.4 L467.4 419.3 L468.5 419.3 L469.6 419.4 L470.6 419.5 L471.7 419.7 L472.8 420.0 L473.9 420.3 L474.9 420.7 L476.0 421.0 L477.0 421.4 L478.0 421.9 L479.0 422.5 L480.0 423.0 L481.0 423.5 L482.0 423.8 L483.0 424.0 L484.0 424.0 L485.0 423.9 L486.0 423.7 L487.0 423.4 L488.0 423.1 L489.0 422.7 L490.0 422.4 L491.0 422.2 L492.0 422.0 L493.0 421.9 L494.0 421.7 L495.0 421.6 L496.0 421.5 L497.0 421.4 L498.0 421.3 L499.0 421.2 L500.0 421.2 L501.0 421.1 L502.0 421.1 L503.0 421.0 L504.0 421.0 L505.0 421.0 L578.8 420.9 L652.5 421.0 L726.2 421.1 L800.0 421.0 L855.2 420.7 L910.5 420.2 L965.8 419.7 L1021.0 419.5" stroke="#4a4800" stroke-width="9" fill="none" stroke-linejoin="round" stroke-opacity="0.8"/>
<path d="M25.5 419.5V424.0M33.5 413.5V409.9M38.5 419.5V423.5M52.5 413.5V408.5M57.5 419.5V427.1M62.5 413.5V405.8M71.5 419.5V422.5M72.5 413.5V407.3M73.5 413.5V406.9M75.5 413.5V408.3M86.5 419.5V425.3M97.5 419.5V427.2M107.5 413.5V406.5M129.5 413.5V408.1M130.5 419.5V424.5M156.5 413.5V405.4M179.5 413.5V406.6M181.5 419.5V427.8M191.5 413.5V404.9M202.5 413.5V407.2M203.5 419.5V428.2M211.5 419.5V425.7M214.5 413.5V408.7M240.5 413.5V408.8M244.5 419.5V424.8M250.5 419.5V425.7M257.5 419.5V426.1M283.5 419.5V422.5M297.5 419.5V428.3M314.5 413.5V410.3M325.5 413.5V407.2M345.5 413.4V409.8M350.5 413.4V408.2M364.5 413.5V405.1M374.5 420.0V427.4M375.5 414.8V409.7M389.5 440.7V448.0M395.5 423.1V418.1M418.5 431.5V439.4M419.5 426.2V418.5M428.5 419.0V414.8M430.5 423.4V431.7M454.5 428.0V434.4M461.5 417.6V411.8M465.5 422.6V429.0M467.5 416.4V410.6M471.5 416.6V412.7M478.5 424.9V428.1M479.5 425.5V431.8M492.5 425.0V431.2M496.5 424.5V429.6M497.5 424.4V427.8M499.5 418.2V414.6M500.5 424.2V429.1M501.5 418.1V415.0M502.5 424.1V430.2M503.5 424.0V428.3M506.5 424.0V430.6M507.5 418.0V415.9M510.5 424.0V431.5M511.5 418.0V412.3M512.5 424.0V426.8M514.5 418.0V413.7M515.5 424.0V431.7M520.5 418.0V411.2M522.5 418.0V412.7M524.5 418.0V411.3M525.5 418.0V415.5M526.5 418.0V410.9M527.5 418.0V415.6M529.5 424.0V426.3M530.5 424.0V431.5M535.5 424.0V430.5M538.5 424.0V431.6M540.5 418.0V410.3M541.5 424.0V428.0M542.5 424.0V431.2M546.5 417.9V415.5M547.5 423.9V426.4M549.5 423.9V426.4M557.5 423.9V428.3M558.5 423.9V431.9M561.5 417.9V414.7M563.5 417.9V414.7M564.5 423.9V429.7M565.5 423.9V426.5M567.5 417.9V414.3M570.5 417.9V414.4M572.5 417.9V414.1M575.5 417.9V412.7M576.5 417.9V411.5M577.5 423.9V429.9M579.5 423.9V430.5M580.5 423.9V429.8M583.5 417.9V410.6M584.5 417.9V415.3M585.5 417.9V414.2M587.5 417.9V412.6M593.5 417.9V414.8M595.5 417.9V413.9M598.5 423.9V429.6M600.5 417.9V415.6M601.5 417.9V412.8M602.5 417.9V415.3M606.5 423.9V430.8M607.5 423.9V427.6M608.5 417.9V411.7M609.5 423.9V429.0M614.5 423.9V429.8M616.5 417.9V413.8M618.5 423.9V426.2M622.5 424.0V428.7M625.5 424.0V431.8M626.5 418.0V414.1M627.5 418.0V415.8M628.5 418.0V413.1M629.5 424.0V431.1M631.5 418.0V410.5M633.5 418.0V411.3M636.5 418.0V414.9M640.5 418.0V411.0M645.5 424.0V427.5M646.5 424.0V428.5M648.5 424.0V427.9M649.5 418.0V413.4M652.5 418.0V412.6M653.5 424.0V430.5M655.5 424.0V428.6M658.5 418.0V411.5M659.5 418.0V415.6M660.5 424.0V430.0M666.5 424.0V429.1M669.5 424.0V428.3M674.5 424.0V430.9M675.5 418.0V411.9M676.5 418.0V410.5M677.5 424.0V430.6M680.5 424.0V431.8M681.5 418.0V410.2M683.5 418.0V411.5M685.5 418.0V413.1M689.5 424.0V429.1M694.5 418.0V412.8M696.5 424.0V430.9M699.5 424.0V426.7M700.5 418.0V412.7M701.5 424.0V429.6M702.5 424.0V431.1M703.5 418.0V415.7M706.5 424.1V431.4M709.5 424.1V430.8M710.5 418.1V414.6M711.5 424.1V431.5M712.5 418.1V415.9M713.5 418.1V414.9M714.5 418.1V414.0M717.5 418.1V410.5M718.5 418.1V415.7M720.5 418.1V410.9M722.5 424.1V429.7M727.5 418.1V416.0M728.5 418.1V413.2M729.5 418.1V411.3M736.5 418.1V410.5M742.5 418.1V415.7M743.5 418.1V413.0M746.5 424.1V427.2M749.5 418.1V415.7M750.5 424.1V430.3M753.5 418.0V412.9M755.5 418.0V414.3M756.5 424.0V427.1M757.5 418.0V415.9M763.5 424.0V426.5M766.5 418.0V411.2M775.5 424.0V426.3M776.5 418.0V410.5M780.5 418.0V411.9M784.5 418.0V412.9M788.5 424.0V431.5M791.5 424.0V430.9M793.5 424.0V428.3M795.5 418.0V410.7M797.5 424.0V431.7M799.5 418.0V414.6M802.5 424.0V427.2M809.5 423.9V429.0M813.5 423.9V430.3M816.5 417.9V415.9M817.5 417.9V411.2M818.5 423.9V426.1M819.5 423.9V427.8M821.5 417.9V412.2M822.5 417.9V410.2M830.5 417.8V410.5M831.5 417.8V414.0M832.5 417.8V413.2M833.5 423.8V430.1M834.5 417.8V410.4M835.5 423.8V430.4M849.5 417.7V415.3M852.5 423.7V427.9M854.5 423.7V430.8M855.5 417.7V412.8M859.5 423.6V427.7M861.5 423.6V431.1M864.5 417.6V412.9M866.5 417.6V414.3M874.5 423.5V426.3M875.5 417.5V413.7M877.5 423.5V430.2M878.5 423.5V427.7M880.5 417.4V411.6M882.5 417.4V409.5M886.5 423.4V430.6M887.5 423.4V430.4M888.5 423.4V425.5M890.5 417.4V411.9M891.5 423.3V428.4M895.5 417.3V412.5M896.5 417.3V414.4M897.5 423.3V426.1M899.5 423.3V426.6M900.5 423.3V429.9M902.5 417.2V410.6M903.5 417.2V410.3M904.5 423.2V430.5M906.5 423.2V428.0M907.5 417.2V410.2M910.5 423.2V430.4M914.5 417.1V414.1M919.5 417.1V409.9M921.5 417.1V411.3M922.5 417.1V411.5M923.5 423.1V427.6M927.5 417.0V411.9M930.5 417.0V412.9M931.5 423.0V425.6M932.5 423.0V429.2M937.5 416.9V410.2M943.5 422.9V428.8M944.5 422.9V429.0M946.5 422.9V426.8M947.5 416.9V410.1M950.5 422.8V425.7M955.5 416.8V411.7M958.5 416.8V409.1M959.5 422.8V428.4M961.5 416.7V409.9M964.5 416.7V409.4M967.5 416.7V414.2M969.5 416.7V412.8M971.5 422.7V430.5M972.5 422.7V425.5M975.5 416.7V409.6M981.5 416.6V413.9M982.5 416.6V413.7M983.5 416.6V410.5M985.5 416.6V413.4M987.5 422.6V425.4M988.5 416.6V412.2M990.5 422.6V428.7M991.5 422.6V430.0M1000.5 416.6V411.9M1004.5 422.6V424.9M1008.5 416.5V410.7M1013.5 416.5V410.3M1014.5 416.5V410.5M1018.5 416.5V409.1M1020.5 422.5V428.5" stroke="#8c8a00" stroke-width="1" fill="none"/>
<path d="M21.5 413.5V405.0M33.5 413.5V405.9M38.5 413.5V405.0M48.5 413.5V403.5M65.5 419.5V429.5M77.5 419.5V425.0M198.5 419.5V428.1M205.5 413.5V408.3M230.5 413.5V403.1M236.5 419.5V430.4M237.5 413.5V402.6M238.5 413.5V402.9M263.5 413.5V408.2M283.5 419.5V427.0M286.5 413.5V407.3M302.5 419.5V425.6M354.5 419.4V427.0M355.5 413.5V406.7M366.5 413.5V407.0M381.5 424.0V415.7M397.5 418.6V412.8M409.5 414.8V408.8M427.5 419.9V410.6M448.5 420.2V413.8M461.5 417.6V408.7M480.5 420.0V412.5M507.5 418.0V407.6M508.5 418.0V407.0M517.5 424.0V431.2M520.5 424.0V432.3M522.5 418.0V411.9M549.5 417.9V407.3M556.5 423.9V434.4M557.5 417.9V409.2M558.5 417.9V408.0M567.5 417.9V408.6M572.5 423.9V430.1M576.5 417.9V412.6M595.5 417.9V412.4M638.5 418.0V407.1M651.5 424.0V433.3M657.5 424.0V434.9M678.5 424.0V432.5M685.5 418.0V407.5M695.5 418.0V411.7M714.5 424.1V430.4M722.5 418.1V411.5M732.5 418.1V411.3M736.5 418.1V412.8M737.5 424.1V430.8M740.5 424.1V432.9M777.5 424.0V429.5M791.5 418.0V412.8M796.5 424.0V430.7M806.5 418.0V412.3M814.5 417.9V410.2M818.5 417.9V409.8M839.5 423.8V430.3M869.5 423.5V429.0M870.5 417.5V409.2M882.5 417.4V407.1M892.5 423.3V429.6M899.5 417.3V406.6M905.5 417.2V409.5M906.5 417.2V408.8M920.5 423.1V434.0M927.5 417.0V409.0M928.5 423.0V429.5M951.5 422.8V432.9M952.5 416.8V409.1M953.5 422.8V433.1M955.5 416.8V410.4M956.5 416.8V409.3M959.5 416.8V406.5M960.5 416.8V407.0M963.5 422.7V432.8M968.5 416.7V409.4M976.5 416.7V407.7M979.5 416.7V407.3M987.5 422.6V430.5M993.5 416.6V409.8M1007.5 422.6V429.3" stroke="#7c7c7c" stroke-width="1" fill="none"/>
<path d="M21.0 416.5 L90.8 416.5 L160.5 416.5 L230.2 416.5 L300.0 416.5 L317.0 416.5 L334.0 416.4 L351.0 416.4 L368.0 416.5 L369.0 416.4 L370.0 416.3 L371.0 416.2 L372.0 416.2 L373.0 416.5 L374.0 417.0 L375.0 417.8 L376.0 419.0 L377.0 420.3 L378.0 421.7 L379.0 423.3 L380.0 425.0 L381.0 427.0 L382.0 429.4 L383.0 432.0 L384.0 434.5 L385.0 436.7 L386.0 438.3 L387.0 439.0 L388.0 438.8 L389.0 437.7 L390.0 436.2 L391.0 434.2 L392.0 432.0 L393.0 429.9 L394.0 428.0 L395.0 426.1 L396.0 423.9 L397.0 421.6 L398.0 419.2 L399.0 417.1 L400.0 415.2 L401.0 413.8 L402.0 413.0 L403.0 412.8 L404.0 413.0 L405.0 413.6 L406.0 414.4 L407.0 415.5 L408.0 416.6 L409.0 417.8 L410.0 419.0 L411.0 420.0 L412.0 421.0 L413.0 422.3 L414.0 423.6 L415.0 425.0 L416.0 426.3 L417.0 427.5 L418.0 428.5 L419.0 429.2 L420.0 429.5 L421.0 429.4 L422.0 428.8 L423.0 427.8 L424.0 426.6 L425.0 425.4 L426.0 424.1 L427.0 422.9 L428.0 422.0 L429.0 421.2 L430.0 420.4 L431.0 419.6 L432.0 418.8 L433.0 418.2 L434.0 417.6 L435.0 417.2 L436.0 417.0 L437.0 417.0 L438.0 417.1 L439.0 417.4 L440.0 417.8 L441.0 418.3 L442.0 418.9 L443.0 419.5 L444.0 420.0 L445.0 420.6 L446.0 421.4 L447.0 422.3 L448.0 423.2 L449.0 424.1 L450.0 424.8 L451.0 425.3 L452.0 425.5 L453.0 425.4 L454.0 425.0 L455.0 424.4 L456.0 423.7 L457.0 422.9 L458.0 422.1 L459.0 421.5 L460.0 421.0 L461.1 420.6 L462.1 420.3 L463.2 420.0 L464.2 419.8 L465.3 419.6 L466.4 419.4 L467.4 419.3 L468.5 419.3 L469.6 419.4 L470.6 419.5 L471.7 419.7 L472.8 420.0 L473.9 420.3 L474.9 420.7 L476.0 421.0 L477.0 421.4 L478.0 421.9 L479.0 422.5 L480.0 423.0 L481.0 423.5 L482.0 423.8 L483.0 424.0 L484.0 424.0 L485.0 423.9 L486.0 423.7 L487.0 423.4 L488.0 423.1 L489.0 422.7 L490.0 422.4 L491.0 422.2 L492.0 422.0 L493.0 421.9 L494.0 421.7 L495.0 421.6 L496.0 421.5 L497.0 421.4 L498.0 421.3 L499.0 421.2 L500.0 421.2 L501.0 421.1 L502.0 421.1 L503.0 421.0 L504.0 421.0 L505.0 421.0 L578.8 420.9 L652.5 421.0 L726.2 421.1 L800.0 421.0 L855.2 420.7 L910.5 420.2 L965.8 419.7 L1021.0 419.5" stroke="#d8d000" stroke-width="6.5" fill="none" stroke-linejoin="round"/>
<path d="M23 417.7h1v1h-1zM26 417.7h1v1h-1zM27 417.7h1v1h-1zM30 417.7h1v1h-1zM31 417.7h1v1h-1zM34 417.7h1v1h-1zM35 417.7h1v1h-1zM38 417.7h1v1h-1zM39 417.7h1v1h-1zM41 417.7h1v1h-1zM45 417.7h1v1h-1zM46 417.7h1v1h-1zM47 417.7h1v1h-1zM50 417.7h1v1h-1zM53 417.7h1v1h-1zM55 417.7h1v1h-1zM57 417.7h1v1h-1zM59 417.7h1v1h-1zM60 417.7h1v1h-1zM62 417.7h1v1h-1zM64 417.7h1v1h-1zM66 417.7h1v1h-1zM67 417.7h1v1h-1zM72 417.7h1v1h-1zM73 417.7h1v1h-1zM75 417.7h1v1h-1zM76 417.7h1v1h-1zM78 417.7h1v1h-1zM81 417.7h1v1h-1zM83 417.7h1v1h-1zM84 417.7h1v1h-1zM86 417.7h1v1h-1zM88 417.7h1v1h-1zM89 417.7h1v1h-1zM90 417.7h1v1h-1zM91 417.7h1v1h-1zM97 417.7h1v1h-1zM98 417.7h1v1h-1zM99 417.7h1v1h-1zM100 417.7h1v1h-1zM101 417.7h1v1h-1zM103 417.7h1v1h-1zM105 417.7h1v1h-1zM106 417.7h1v1h-1zM107 417.7h1v1h-1zM108 417.7h1v1h-1zM111 417.7h1v1h-1zM112 417.7h1v1h-1zM113 417.7h1v1h-1zM115 417.7h1v1h-1zM116 417.7h1v1h-1zM117 417.7h1v1h-1zM118 417.7h1v1h-1zM121 417.7h1v1h-1zM122 417.7h1v1h-1zM123 417.7h1v1h-1zM124 417.7h1v1h-1zM125 417.7h1v1h-1zM126 417.7h1v1h-1zM127 417.7h1v1h-1zM130 417.7h1v1h-1zM132 417.7h1v1h-1zM133 417.7h1v1h-1zM134 417.7h1v1h-1zM135 417.7h1v1h-1zM136 417.7h1v1h-1zM137 417.7h1v1h-1zM138 417.7h1v1h-1zM139 417.7h1v1h-1zM143 417.7h1v1h-1zM144 417.7h1v1h-1zM148 417.7h1v1h-1zM152 417.7h1v1h-1zM153 417.7h1v1h-1zM154 417.7h1v1h-1zM155 417.7h1v1h-1zM156 417.7h1v1h-1zM157 417.7h1v1h-1zM159 417.7h1v1h-1zM165 417.7h1v1h-1zM166 417.7h1v1h-1zM168 417.7h1v1h-1zM171 417.7h1v1h-1zM173 417.7h1v1h-1zM176 417.7h1v1h-1zM177 417.7h1v1h-1zM182 417.7h1v1h-1zM185 417.7h1v1h-1zM186 417.7h1v1h-1zM187 417.7h1v1h-1zM190 417.7h1v1h-1zM191 417.7h1v1h-1zM192 417.7h1v1h-1zM193 417.7h1v1h-1zM194 417.7h1v1h-1zM195 417.7h1v1h-1zM202 417.7h1v1h-1zM206 417.7h1v1h-1zM207 417.7h1v1h-1zM210 417.7h1v1h-1zM211 417.7h1v1h-1zM215 417.7h1v1h-1zM216 417.7h1v1h-1zM217 417.7h1v1h-1zM218 417.7h1v1h-1zM219 417.7h1v1h-1zM220 417.7h1v1h-1zM222 417.7h1v1h-1zM223 417.7h1v1h-1zM225 417.7h1v1h-1zM226 417.7h1v1h-1zM227 417.7h1v1h-1zM228 417.7h1v1h-1zM231 417.7h1v1h-1zM232 417.7h1v1h-1zM233 417.7h1v1h-1zM234 417.7h1v1h-1zM235 417.7h1v1h-1zM236 417.7h1v1h-1zM237 417.7h1v1h-1zM239 417.7h1v1h-1zM241 417.7h1v1h-1zM243 417.7h1v1h-1zM244 417.7h1v1h-1zM245 417.7h1v1h-1zM250 417.7h1v1h-1zM254 417.7h1v1h-1zM255 417.7h1v1h-1zM256 417.7h1v1h-1zM257 417.7h1v1h-1zM258 417.7h1v1h-1zM261 417.7h1v1h-1zM263 417.7h1v1h-1zM264 417.7h1v1h-1zM266 417.7h1v1h-1zM268 417.7h1v1h-1zM269 417.7h1v1h-1zM271 417.7h1v1h-1zM272 417.7h1v1h-1zM275 417.7h1v1h-1zM276 417.7h1v1h-1zM279 417.7h1v1h-1zM287 417.7h1v1h-1zM288 417.7h1v1h-1zM291 417.7h1v1h-1zM293 417.7h1v1h-1zM295 417.7h1v1h-1zM298 417.7h1v1h-1zM300 417.7h1v1h-1zM305 417.7h1v1h-1zM306 417.7h1v1h-1zM307 417.7h1v1h-1zM310 417.7h1v1h-1zM311 417.7h1v1h-1zM312 417.7h1v1h-1zM314 417.7h1v1h-1zM315 417.7h1v1h-1zM316 417.7h1v1h-1zM317 417.7h1v1h-1zM318 417.7h1v1h-1zM321 417.7h1v1h-1zM323 417.7h1v1h-1zM325 417.7h1v1h-1zM330 417.7h1v1h-1zM334 417.6h1v1h-1zM335 417.6h1v1h-1zM338 417.6h1v1h-1zM339 417.6h1v1h-1zM342 417.6h1v1h-1zM345 417.6h1v1h-1zM346 417.6h1v1h-1zM348 417.6h1v1h-1zM350 417.6h1v1h-1zM351 417.6h1v1h-1zM353 417.6h1v1h-1zM354 417.6h1v1h-1zM357 417.7h1v1h-1zM358 417.7h1v1h-1zM360 417.7h1v1h-1zM361 417.7h1v1h-1zM362 417.7h1v1h-1zM364 417.7h1v1h-1zM365 417.7h1v1h-1zM367 417.7h1v1h-1zM368 417.7h1v1h-1zM369 417.6h1v1h-1zM370 417.5h1v1h-1zM372 417.4h1v1h-1zM374 418.2h1v1h-1zM376 420.2h1v1h-1zM377 421.5h1v1h-1zM379 424.5h1v1h-1zM381 428.2h1v1h-1zM382 430.6h1v1h-1zM383 433.2h1v1h-1zM384 435.7h1v1h-1zM385 437.9h1v1h-1zM386 439.5h1v1h-1zM392 433.2h1v1h-1zM393 431.1h1v1h-1zM394 429.2h1v1h-1zM396 425.1h1v1h-1zM397 422.8h1v1h-1zM398 420.4h1v1h-1zM400 416.4h1v1h-1zM402 414.2h1v1h-1zM403 414.0h1v1h-1zM404 414.2h1v1h-1zM405 414.8h1v1h-1zM409 419.0h1v1h-1zM411 421.2h1v1h-1zM413 423.5h1v1h-1zM414 424.8h1v1h-1zM415 426.2h1v1h-1zM418 429.7h1v1h-1zM419 430.4h1v1h-1zM420 430.7h1v1h-1zM422 430.0h1v1h-1zM425 426.6h1v1h-1zM426 425.3h1v1h-1zM427 424.1h1v1h-1zM430 421.6h1v1h-1zM431 420.8h1v1h-1zM432 420.0h1v1h-1zM433 419.4h1v1h-1zM435 418.4h1v1h-1zM437 418.2h1v1h-1zM441 419.5h1v1h-1zM442 420.1h1v1h-1zM444 421.2h1v1h-1zM447 423.5h1v1h-1zM449 425.3h1v1h-1zM452 426.7h1v1h-1zM453 426.6h1v1h-1zM454 426.2h1v1h-1zM456 424.9h1v1h-1zM457 424.1h1v1h-1zM460 422.2h1v1h-1zM461 421.8h1v1h-1zM462 421.5h1v1h-1zM464 421.0h1v1h-1zM468 420.5h1v1h-1zM472 421.0h1v1h-1zM473 421.3h1v1h-1zM475 421.9h1v1h-1zM477 422.6h1v1h-1zM481 424.7h1v1h-1zM482 425.0h1v1h-1zM483 425.2h1v1h-1zM485 425.1h1v1h-1zM486 424.9h1v1h-1zM489 423.9h1v1h-1zM491 423.4h1v1h-1zM492 423.2h1v1h-1zM493 423.1h1v1h-1zM494 422.9h1v1h-1zM495 422.8h1v1h-1zM496 422.7h1v1h-1zM497 422.6h1v1h-1zM498 422.5h1v1h-1zM502 422.3h1v1h-1zM503 422.2h1v1h-1zM506 422.2h1v1h-1zM508 422.2h1v1h-1zM509 422.2h1v1h-1zM510 422.2h1v1h-1zM512 422.2h1v1h-1zM513 422.2h1v1h-1zM516 422.2h1v1h-1zM517 422.2h1v1h-1zM519 422.2h1v1h-1zM523 422.2h1v1h-1zM525 422.2h1v1h-1zM526 422.2h1v1h-1zM527 422.2h1v1h-1zM529 422.2h1v1h-1zM530 422.2h1v1h-1zM531 422.2h1v1h-1zM533 422.2h1v1h-1zM534 422.2h1v1h-1zM537 422.2h1v1h-1zM538 422.2h1v1h-1zM539 422.2h1v1h-1zM541 422.2h1v1h-1zM542 422.2h1v1h-1zM543 422.2h1v1h-1zM544 422.2h1v1h-1zM545 422.1h1v1h-1zM546 422.1h1v1h-1zM547 422.1h1v1h-1zM549 422.1h1v1h-1zM550 422.1h1v1h-1zM556 422.1h1v1h-1zM558 422.1h1v1h-1zM562 422.1h1v1h-1zM563 422.1h1v1h-1zM564 422.1h1v1h-1zM567 422.1h1v1h-1zM568 422.1h1v1h-1zM574 422.1h1v1h-1zM575 422.1h1v1h-1zM577 422.1h1v1h-1zM582 422.1h1v1h-1zM584 422.1h1v1h-1zM585 422.1h1v1h-1zM590 422.1h1v1h-1zM591 422.1h1v1h-1zM593 422.1h1v1h-1zM600 422.1h1v1h-1zM602 422.1h1v1h-1zM603 422.1h1v1h-1zM605 422.1h1v1h-1zM608 422.1h1v1h-1zM609 422.1h1v1h-1zM610 422.1h1v1h-1zM613 422.1h1v1h-1zM615 422.1h1v1h-1zM618 422.1h1v1h-1zM620 422.2h1v1h-1zM622 422.2h1v1h-1zM625 422.2h1v1h-1zM628 422.2h1v1h-1zM630 422.2h1v1h-1zM633 422.2h1v1h-1zM634 422.2h1v1h-1zM635 422.2h1v1h-1zM638 422.2h1v1h-1zM640 422.2h1v1h-1zM641 422.2h1v1h-1zM644 422.2h1v1h-1zM650 422.2h1v1h-1zM654 422.2h1v1h-1zM657 422.2h1v1h-1zM659 422.2h1v1h-1zM660 422.2h1v1h-1zM661 422.2h1v1h-1zM662 422.2h1v1h-1zM669 422.2h1v1h-1zM674 422.2h1v1h-1zM677 422.2h1v1h-1zM680 422.2h1v1h-1zM681 422.2h1v1h-1zM684 422.2h1v1h-1zM686 422.2h1v1h-1zM689 422.2h1v1h-1zM699 422.2h1v1h-1zM700 422.2h1v1h-1zM702 422.2h1v1h-1zM704 422.2h1v1h-1zM705 422.3h1v1h-1zM708 422.3h1v1h-1zM709 422.3h1v1h-1zM714 422.3h1v1h-1zM718 422.3h1v1h-1zM719 422.3h1v1h-1zM721 422.3h1v1h-1zM723 422.3h1v1h-1zM725 422.3h1v1h-1zM726 422.3h1v1h-1zM727 422.3h1v1h-1zM730 422.3h1v1h-1zM731 422.3h1v1h-1zM732 422.3h1v1h-1zM733 422.3h1v1h-1zM738 422.3h1v1h-1zM742 422.3h1v1h-1zM743 422.3h1v1h-1zM744 422.3h1v1h-1zM745 422.3h1v1h-1zM746 422.3h1v1h-1zM747 422.3h1v1h-1zM748 422.3h1v1h-1zM749 422.3h1v1h-1zM750 422.3h1v1h-1zM751 422.3h1v1h-1zM755 422.2h1v1h-1zM757 422.2h1v1h-1zM764 422.2h1v1h-1zM765 422.2h1v1h-1zM767 422.2h1v1h-1zM768 422.2h1v1h-1zM769 422.2h1v1h-1zM771 422.2h1v1h-1zM773 422.2h1v1h-1zM774 422.2h1v1h-1zM776 422.2h1v1h-1zM777 422.2h1v1h-1zM778 422.2h1v1h-1zM781 422.2h1v1h-1zM783 422.2h1v1h-1zM784 422.2h1v1h-1zM786 422.2h1v1h-1zM787 422.2h1v1h-1zM788 422.2h1v1h-1zM792 422.2h1v1h-1zM795 422.2h1v1h-1zM796 422.2h1v1h-1zM797 422.2h1v1h-1zM802 422.2h1v1h-1zM803 422.2h1v1h-1zM805 422.2h1v1h-1zM807 422.2h1v1h-1zM810 422.1h1v1h-1zM811 422.1h1v1h-1zM814 422.1h1v1h-1zM817 422.1h1v1h-1zM818 422.1h1v1h-1zM819 422.1h1v1h-1zM823 422.1h1v1h-1zM825 422.1h1v1h-1zM832 422.0h1v1h-1zM834 422.0h1v1h-1zM835 422.0h1v1h-1zM839 422.0h1v1h-1zM840 422.0h1v1h-1zM841 422.0h1v1h-1zM843 421.9h1v1h-1zM846 421.9h1v1h-1zM853 421.9h1v1h-1zM854 421.9h1v1h-1zM856 421.9h1v1h-1zM858 421.9h1v1h-1zM859 421.8h1v1h-1zM861 421.8h1v1h-1zM862 421.8h1v1h-1zM863 421.8h1v1h-1zM864 421.8h1v1h-1zM867 421.8h1v1h-1zM874 421.7h1v1h-1zM877 421.7h1v1h-1zM878 421.7h1v1h-1zM879 421.7h1v1h-1zM885 421.6h1v1h-1zM886 421.6h1v1h-1zM887 421.6h1v1h-1zM888 421.6h1v1h-1zM889 421.6h1v1h-1zM890 421.6h1v1h-1zM891 421.5h1v1h-1zM892 421.5h1v1h-1zM895 421.5h1v1h-1zM900 421.5h1v1h-1zM901 421.5h1v1h-1zM903 421.4h1v1h-1zM904 421.4h1v1h-1zM906 421.4h1v1h-1zM909 421.4h1v1h-1zM913 421.3h1v1h-1zM914 421.3h1v1h-1zM917 421.3h1v1h-1zM920 421.3h1v1h-1zM924 421.3h1v1h-1zM927 421.2h1v1h-1zM929 421.2h1v1h-1zM932 421.2h1v1h-1zM934 421.2h1v1h-1zM935 421.2h1v1h-1zM937 421.1h1v1h-1zM938 421.1h1v1h-1zM939 421.1h1v1h-1zM940 421.1h1v1h-1zM941 421.1h1v1h-1zM943 421.1h1v1h-1zM947 421.1h1v1h-1zM950 421.0h1v1h-1zM954 421.0h1v1h-1zM955 421.0h1v1h-1zM956 421.0h1v1h-1zM957 421.0h1v1h-1zM958 421.0h1v1h-1zM959 421.0h1v1h-1zM962 420.9h1v1h-1zM964 420.9h1v1h-1zM966 420.9h1v1h-1zM967 420.9h1v1h-1zM972 420.9h1v1h-1zM973 420.9h1v1h-1zM974 420.9h1v1h-1zM978 420.9h1v1h-1zM980 420.9h1v1h-1zM982 420.8h1v1h-1zM986 420.8h1v1h-1zM990 420.8h1v1h-1zM993 420.8h1v1h-1zM994 420.8h1v1h-1zM996 420.8h1v1h-1zM997 420.8h1v1h-1zM1001 420.8h1v1h-1zM1002 420.8h1v1h-1zM1008 420.7h1v1h-1zM1010 420.7h1v1h-1zM1011 420.7h1v1h-1zM1012 420.7h1v1h-1zM1013 420.7h1v1h-1zM1014 420.7h1v1h-1zM1015 420.7h1v1h-1zM1018 420.7h1v1h-1zM1019 420.7h1v1h-1zM1020 420.7h1v1h-1z" fill="#8a8400"/>
<path d="M22 413.5h1v1h-1zM28 413.5h1v1h-1zM33 413.5h1v1h-1zM36 413.5h1v1h-1zM40 413.5h1v1h-1zM45 413.5h1v1h-1zM50 413.5h1v1h-1zM53 413.5h1v1h-1zM65 413.5h1v1h-1zM69 413.5h1v1h-1zM70 413.5h1v1h-1zM71 413.5h1v1h-1zM79 413.5h1v1h-1zM82 413.5h1v1h-1zM88 413.5h1v1h-1zM96 413.5h1v1h-1zM98 413.5h1v1h-1zM101 413.5h1v1h-1zM108 413.5h1v1h-1zM113 413.5h1v1h-1zM123 413.5h1v1h-1zM125 413.5h1v1h-1zM133 413.5h1v1h-1zM150 413.5h1v1h-1zM154 413.5h1v1h-1zM155 413.5h1v1h-1zM157 413.5h1v1h-1zM165 413.5h1v1h-1zM167 413.5h1v1h-1zM174 413.5h1v1h-1zM180 413.5h1v1h-1zM181 413.5h1v1h-1zM185 413.5h1v1h-1zM187 413.5h1v1h-1zM188 413.5h1v1h-1zM189 413.5h1v1h-1zM216 413.5h1v1h-1zM221 413.5h1v1h-1zM222 413.5h1v1h-1zM230 413.5h1v1h-1zM233 413.5h1v1h-1zM239 413.5h1v1h-1zM244 413.5h1v1h-1zM248 413.5h1v1h-1zM249 413.5h1v1h-1zM251 413.5h1v1h-1zM256 413.5h1v1h-1zM261 413.5h1v1h-1zM263 413.5h1v1h-1zM269 413.5h1v1h-1zM271 413.5h1v1h-1zM277 413.5h1v1h-1zM279 413.5h1v1h-1zM281 413.5h1v1h-1zM288 413.5h1v1h-1zM295 413.5h1v1h-1zM297 413.5h1v1h-1zM302 413.5h1v1h-1zM313 413.5h1v1h-1zM318 413.5h1v1h-1zM321 413.5h1v1h-1zM327 413.5h1v1h-1zM338 413.4h1v1h-1zM342 413.4h1v1h-1zM346 413.4h1v1h-1zM356 413.5h1v1h-1zM358 413.5h1v1h-1zM364 413.5h1v1h-1zM369 413.4h1v1h-1zM373 413.5h1v1h-1zM379 420.3h1v1h-1zM392 429.0h1v1h-1zM402 410.0h1v1h-1zM404 410.0h1v1h-1zM407 412.5h1v1h-1zM412 418.0h1v1h-1zM420 426.5h1v1h-1zM427 419.9h1v1h-1zM437 414.0h1v1h-1zM438 414.1h1v1h-1zM444 417.0h1v1h-1zM449 421.1h1v1h-1zM452 422.5h1v1h-1zM457 419.9h1v1h-1zM461 417.6h1v1h-1zM462 417.3h1v1h-1zM467 416.4h1v1h-1zM468 416.3h1v1h-1zM470 416.4h1v1h-1zM472 416.8h1v1h-1zM479 419.5h1v1h-1zM482 420.8h1v1h-1zM487 420.4h1v1h-1zM489 419.7h1v1h-1zM495 418.6h1v1h-1zM506 418.0h1v1h-1zM507 418.0h1v1h-1zM511 418.0h1v1h-1zM512 418.0h1v1h-1zM516 418.0h1v1h-1zM521 418.0h1v1h-1zM522 418.0h1v1h-1zM525 418.0h1v1h-1zM526 418.0h1v1h-1zM527 418.0h1v1h-1zM528 418.0h1v1h-1zM535 418.0h1v1h-1zM537 418.0h1v1h-1zM539 418.0h1v1h-1zM545 417.9h1v1h-1zM548 417.9h1v1h-1zM549 417.9h1v1h-1zM556 417.9h1v1h-1zM557 417.9h1v1h-1zM558 417.9h1v1h-1zM559 417.9h1v1h-1zM565 417.9h1v1h-1zM572 417.9h1v1h-1zM580 417.9h1v1h-1zM583 417.9h1v1h-1zM592 417.9h1v1h-1zM594 417.9h1v1h-1zM595 417.9h1v1h-1zM600 417.9h1v1h-1zM601 417.9h1v1h-1zM605 417.9h1v1h-1zM609 417.9h1v1h-1zM611 417.9h1v1h-1zM614 417.9h1v1h-1zM615 417.9h1v1h-1zM618 417.9h1v1h-1zM620 418.0h1v1h-1zM630 418.0h1v1h-1zM633 418.0h1v1h-1zM648 418.0h1v1h-1zM649 418.0h1v1h-1zM660 418.0h1v1h-1zM669 418.0h1v1h-1zM675 418.0h1v1h-1zM678 418.0h1v1h-1zM679 418.0h1v1h-1zM680 418.0h1v1h-1zM689 418.0h1v1h-1zM693 418.0h1v1h-1zM697 418.0h1v1h-1zM704 418.0h1v1h-1zM709 418.1h1v1h-1zM710 418.1h1v1h-1zM718 418.1h1v1h-1zM727 418.1h1v1h-1zM728 418.1h1v1h-1zM729 418.1h1v1h-1zM730 418.1h1v1h-1zM734 418.1h1v1h-1zM735 418.1h1v1h-1zM741 418.1h1v1h-1zM744 418.1h1v1h-1zM768 418.0h1v1h-1zM772 418.0h1v1h-1zM778 418.0h1v1h-1zM782 418.0h1v1h-1zM784 418.0h1v1h-1zM791 418.0h1v1h-1zM794 418.0h1v1h-1zM797 418.0h1v1h-1zM801 418.0h1v1h-1zM804 418.0h1v1h-1zM815 417.9h1v1h-1zM817 417.9h1v1h-1zM826 417.8h1v1h-1zM832 417.8h1v1h-1zM837 417.8h1v1h-1zM841 417.8h1v1h-1zM846 417.7h1v1h-1zM871 417.5h1v1h-1zM872 417.5h1v1h-1zM881 417.4h1v1h-1zM882 417.4h1v1h-1zM884 417.4h1v1h-1zM889 417.4h1v1h-1zM891 417.3h1v1h-1zM897 417.3h1v1h-1zM900 417.3h1v1h-1zM905 417.2h1v1h-1zM916 417.1h1v1h-1zM917 417.1h1v1h-1zM919 417.1h1v1h-1zM921 417.1h1v1h-1zM922 417.1h1v1h-1zM928 417.0h1v1h-1zM929 417.0h1v1h-1zM931 417.0h1v1h-1zM940 416.9h1v1h-1zM946 416.9h1v1h-1zM952 416.8h1v1h-1zM955 416.8h1v1h-1zM963 416.7h1v1h-1zM966 416.7h1v1h-1zM973 416.7h1v1h-1zM974 416.7h1v1h-1zM978 416.7h1v1h-1zM982 416.6h1v1h-1zM986 416.6h1v1h-1zM993 416.6h1v1h-1zM994 416.6h1v1h-1zM995 416.6h1v1h-1zM997 416.6h1v1h-1zM1011 416.5h1v1h-1zM1012 416.5h1v1h-1zM1014 416.5h1v1h-1zM1019 416.5h1v1h-1z" fill="#e4e2a0"/>
<line x1="21" y1="408.5" x2="1021" y2="408.5" stroke="#f0f000" stroke-width="1.5"/>
<line x1="21" y1="444.5" x2="1021" y2="444.5" stroke="#f0f000" stroke-width="1.5"/>
<clipPath id="cpsq"><rect x="1000" y="395" width="22" height="25"/></clipPath>
<rect x="1014.5" y="401.5" width="14" height="14" fill="none" stroke="#f0f0f0" stroke-width="1.2" clip-path="url(#cpsq)"/>
<clipPath id="cpc"><rect x="21" y="430" width="20" height="30"/></clipPath>
<circle cx="21" cy="444.5" r="7" fill="none" stroke="#e8e8c0" stroke-width="1.2" clip-path="url(#cpc)"/>
<circle cx="34" cy="417" r="8" fill="#ff4400"/>
<text x="34" y="421.5" font-size="14" fill="#000" stroke="#000" stroke-width="0.2" font-weight="bold" text-anchor="middle" >a</text>
<circle cx="34" cy="433.5" r="8" fill="#ff4400"/>
<text x="34" y="438.0" font-size="14" fill="#000" stroke="#000" stroke-width="0.2" font-weight="bold" text-anchor="middle" >b</text>
<path d="M1.5 362.0 H13 L19.8 369.5 L13 377.0 H1.5 Q0.75 377.0 0.75 376.0 V363.0 Q0.75 362.0 1.5 362.0 Z" fill="#040404" stroke="#14dc14" stroke-width="1.6"/>
<path d="M10.5 364.0 V375.5 M3.8 371.3 H12.5" stroke="#14dc14" stroke-width="1.6" fill="none"/>
<path d="M4 370.7 L10 364.0" stroke="#14dc14" stroke-width="0.8" fill="none" stroke-opacity="0.8"/>
<path d="M2 659 H13 L20 667 L13 675.5 H2 Q0 675.5 0 673.5 V661 Q0 659 2 659 Z" fill="#f0f000"/>
<path d="M13 675.5 H2" stroke="#a8a800" stroke-width="1"/>
<path d="M5.8 664.2 L8.6 662 V673" stroke="#000" stroke-width="2.1" fill="none"/>
<text x="24" y="671.5" font-size="15" fill="#fff" stroke="#fff" stroke-width="0.2" font-weight="normal" text-anchor="start" clip-path="url(#cpv2)">Vr</text>
<clipPath id="cpv2"><rect x="21" y="650" width="100" height="18"/></clipPath>
<rect x="708.5" y="190.5" width="301" height="78" rx="8" fill="#040404" stroke="#e8e8e8" stroke-width="1"/>
<rect x="727" y="194.5" width="14.5" height="14" fill="none" stroke="#f0f000" stroke-width="1.2"/>
<circle cx="734.5" cy="221.5" r="7" fill="none" stroke="#f0f000" stroke-width="1.2"/>
<circle cx="886" cy="202" r="8" fill="#ff4400"/>
<text x="886" y="206.5" font-size="14" fill="#000" stroke="#000" stroke-width="0.2" font-weight="bold" text-anchor="middle" >a</text>
<circle cx="886" cy="221.3" r="8" fill="#ff4400"/>
<text x="886" y="225.8" font-size="14" fill="#000" stroke="#000" stroke-width="0.2" font-weight="bold" text-anchor="middle" >b</text>
<text x="782" y="207" font-size="15" fill="#f0f000" stroke="#f0f000" stroke-width="0.2" font-weight="normal" text-anchor="start" textLength="78" lengthAdjust="spacing" >−120.6ms</text>
<text x="782" y="226" font-size="15" fill="#f0f000" stroke="#f0f000" stroke-width="0.2" font-weight="normal" text-anchor="start" textLength="78" lengthAdjust="spacing" >−160.6ms</text>
<text x="780" y="245" font-size="15" fill="#f0f000" stroke="#f0f000" stroke-width="0.2" font-weight="normal" text-anchor="start" textLength="82" lengthAdjust="spacing" >Δ40.00ms</text>
<text x="799" y="264" font-size="15" fill="#f0f000" stroke="#f0f000" stroke-width="0.2" font-weight="normal" text-anchor="start" textLength="45" lengthAdjust="spacing" >dV/dt</text>
<text x="922" y="207" font-size="15" fill="#f0f000" stroke="#f0f000" stroke-width="0.2" font-weight="normal" text-anchor="start" textLength="60" lengthAdjust="spacing" >5.180 V</text>
<text x="922" y="226" font-size="15" fill="#f0f000" stroke="#f0f000" stroke-width="0.2" font-weight="normal" text-anchor="start" textLength="60" lengthAdjust="spacing" >4.460 V</text>
<text x="910" y="245" font-size="15" fill="#f0f000" stroke="#f0f000" stroke-width="0.2" font-weight="normal" text-anchor="start" textLength="85" lengthAdjust="spacing" >Δ720.0mV</text>
<text x="916" y="264" font-size="15" fill="#f0f000" stroke="#f0f000" stroke-width="0.2" font-weight="normal" text-anchor="start" textLength="75" lengthAdjust="spacing" >18.00 V/s</text>
<rect x="20.5" y="670.5" width="554" height="20" rx="8" fill="none" stroke="#e0e0e0" stroke-width="1"/>
<rect x="26" y="673" width="25" height="16" rx="8" fill="#f0f000"/>
<path d="M36 677.5 L38.8 675.2 V686" stroke="#000" stroke-width="2.1" fill="none"/>
<text x="69" y="686" font-size="15" fill="#f0f000" stroke="#f0f000" stroke-width="0.2" font-weight="normal" text-anchor="start" textLength="49" lengthAdjust="spacing" >1.00 V</text>
<rect x="443" y="673" width="25" height="16" rx="8" fill="#06a406"/>
<path d="M457 675.5 V686.5 M450.5 683 H459.5" stroke="#000" stroke-width="1.6" fill="none"/><path d="M451 682.5 L456.5 676" stroke="#000" stroke-width="0.9" fill="none"/>
<text x="485" y="686" font-size="15" fill="#20c020" stroke="#20c020" stroke-width="0.2" font-weight="normal" text-anchor="start" textLength="55" lengthAdjust="spacing" >500mA</text>
<rect x="582.5" y="670.5" width="147" height="37" rx="8" fill="none" stroke="#e0e0e0" stroke-width="1"/>
<text x="588" y="686" font-size="15" fill="#fff" stroke="#fff" stroke-width="0.2" font-weight="normal" text-anchor="start" textLength="72" lengthAdjust="spacing" >Z 4.00ms</text>
<rect x="737.5" y="670.5" width="106" height="37" rx="8" fill="none" stroke="#e0e0e0" stroke-width="1"/>
<text x="743" y="686" font-size="15" fill="#fff" stroke="#fff" stroke-width="0.2" font-weight="normal" text-anchor="start" textLength="75" lengthAdjust="spacing" >5.00MS/s</text>
<text x="743" y="702" font-size="15" fill="#fff" stroke="#fff" stroke-width="0.2" font-weight="normal" text-anchor="start" textLength="90" lengthAdjust="spacing" >20M points</text>
<rect x="851.5" y="670.5" width="170" height="37" rx="8" fill="none" stroke="#e0e0e0" stroke-width="1"/>
<rect x="882" y="673" width="25" height="16" rx="8" fill="#f0f000"/>
<path d="M892 677.5 L894.8 675.2 V686" stroke="#000" stroke-width="2.1" fill="none"/>
<path d="M920 684.5 H924.5 L928 676.5 H933" stroke="#fff" stroke-width="1.5" fill="none"/>
<text x="961" y="686" font-size="15" fill="#fff" stroke="#fff" stroke-width="0.2" font-weight="normal" text-anchor="start" textLength="54" lengthAdjust="spacing" >920mV</text>
<rect x="20.75" y="714.75" width="112.5" height="52.5" rx="4" fill="#555555" stroke="#6a6a6a" stroke-width="1.5"/>
<text x="48" y="728.5" font-size="15" fill="#f4f4f4" stroke="#f4f4f4" stroke-width="0.2" font-weight="normal" text-anchor="start" textLength="59" lengthAdjust="spacing" >Cursors</text>
<text x="38" y="748" font-size="15" fill="#f4f4f4" stroke="#f4f4f4" stroke-width="0.2" font-weight="normal" text-anchor="start" textLength="79" lengthAdjust="spacing" >Waveform</text>
<rect x="46.5" y="751.5" width="61" height="17" rx="3" fill="#0a6cf0" stroke="#d8e4f8" stroke-width="1"/>
<text x="51" y="765" font-size="15" fill="#f4f4f4" stroke="#f4f4f4" stroke-width="0.2" font-weight="normal" text-anchor="start" textLength="52" lengthAdjust="spacing" >Screen</text>
<rect x="138.75" y="714.75" width="112.5" height="52.5" rx="4" fill="#555555" stroke="#6a6a6a" stroke-width="1.5"/>
<text x="169" y="728.5" font-size="15" fill="#f4f4f4" stroke="#f4f4f4" stroke-width="0.2" font-weight="normal" text-anchor="start" textLength="52" lengthAdjust="spacing" >Source</text>
<rect x="160" y="734" width="70" height="15" fill="#0a6cf0"/>
<text x="163" y="746" font-size="15" fill="#f4f4f4" stroke="#f4f4f4" stroke-width="0.2" font-weight="normal" text-anchor="start" textLength="65" lengthAdjust="spacing" >Selected</text>
<rect x="154" y="749" width="84" height="17" fill="#0a6cf0"/>
<text x="156" y="763" font-size="15" fill="#f4f4f4" stroke="#f4f4f4" stroke-width="0.2" font-weight="normal" text-anchor="start" textLength="79" lengthAdjust="spacing" >Waveform</text>
<rect x="256.75" y="714.75" width="112.5" height="52.5" rx="4" fill="#555555" stroke="#6a6a6a" stroke-width="1.5"/>
<text x="299" y="728.5" font-size="15" fill="#f4f4f4" stroke="#f4f4f4" stroke-width="0.2" font-weight="normal" text-anchor="start" textLength="30" lengthAdjust="spacing" >Bars</text>
<rect x="268.0" y="735.0" width="91" height="16" rx="3" fill="#0a6cf0" stroke="#d8e4f8" stroke-width="1"/>
<text x="273" y="746" font-size="15" fill="#f4f4f4" stroke="#f4f4f4" stroke-width="0.2" font-weight="normal" text-anchor="start" textLength="82" lengthAdjust="spacing" >Horizontal</text>
<text x="284" y="764.5" font-size="15" fill="#f4f4f4" stroke="#f4f4f4" stroke-width="0.2" font-weight="normal" text-anchor="start" textLength="58" lengthAdjust="spacing" >Vertical</text>
<rect x="374.75" y="714.75" width="112.5" height="52.5" rx="4" fill="#555555" stroke="#6a6a6a" stroke-width="1.5"/>
<text x="407" y="733" font-size="15" fill="#f4f4f4" stroke="#f4f4f4" stroke-width="0.2" font-weight="normal" text-anchor="start" textLength="51" lengthAdjust="spacing" >Linked</text>
<text x="391" y="760" font-size="15" fill="#f4f4f4" stroke="#f4f4f4" stroke-width="0.2" font-weight="normal" text-anchor="start" textLength="22" lengthAdjust="spacing" >On</text>
<rect x="444.0" y="742.5" width="32" height="25" rx="3" fill="#0a6cf0" stroke="#d8e4f8" stroke-width="1"/>
<text x="447.5" y="760" font-size="15" fill="#f4f4f4" stroke="#f4f4f4" stroke-width="0.2" font-weight="normal" text-anchor="start" textLength="25" lengthAdjust="spacing" >Off</text>
<rect x="492.75" y="714.75" width="112.5" height="52.5" rx="4" fill="#383838" stroke="#4c4c4c" stroke-width="1.5"/>
<text x="529" y="728.5" font-size="15" fill="#7a7a7a" stroke="#7a7a7a" stroke-width="0.2" font-weight="normal" text-anchor="start" textLength="41" lengthAdjust="spacing" >Bring</text>
<text x="520" y="746" font-size="15" fill="#7a7a7a" stroke="#7a7a7a" stroke-width="0.2" font-weight="normal" text-anchor="start" textLength="59" lengthAdjust="spacing" >Cursors</text>
<text x="509" y="763" font-size="15" fill="#7a7a7a" stroke="#7a7a7a" stroke-width="0.2" font-weight="normal" text-anchor="start" textLength="81" lengthAdjust="spacing" >On Screen</text>
<rect x="610.75" y="714.75" width="112.5" height="52.5" rx="4" fill="#555555" stroke="#6a6a6a" stroke-width="1.5"/>
<text x="641.5" y="738" font-size="15" fill="#f4f4f4" stroke="#f4f4f4" stroke-width="0.2" font-weight="normal" text-anchor="start" textLength="52" lengthAdjust="spacing" >Cursor</text>
<text x="647" y="755" font-size="15" fill="#f4f4f4" stroke="#f4f4f4" stroke-width="0.2" font-weight="normal" text-anchor="start" textLength="41.5" lengthAdjust="spacing" >Units</text>
<rect x="909.5" y="729.5" width="112" height="36" rx="8" fill="none" stroke="#e0e0e0" stroke-width="1"/>
<text x="926" y="746" font-size="15" fill="#fff" stroke="#fff" stroke-width="0.2" font-weight="normal" text-anchor="start" textLength="89" lengthAdjust="spacing" >3 Jun 2021</text>
<text x="916" y="761.5" font-size="15" fill="#fff" stroke="#fff" stroke-width="0.2" font-weight="normal" text-anchor="start" textLength="69.5" lengthAdjust="spacing" >09:55:19</text></svg></body></html>
